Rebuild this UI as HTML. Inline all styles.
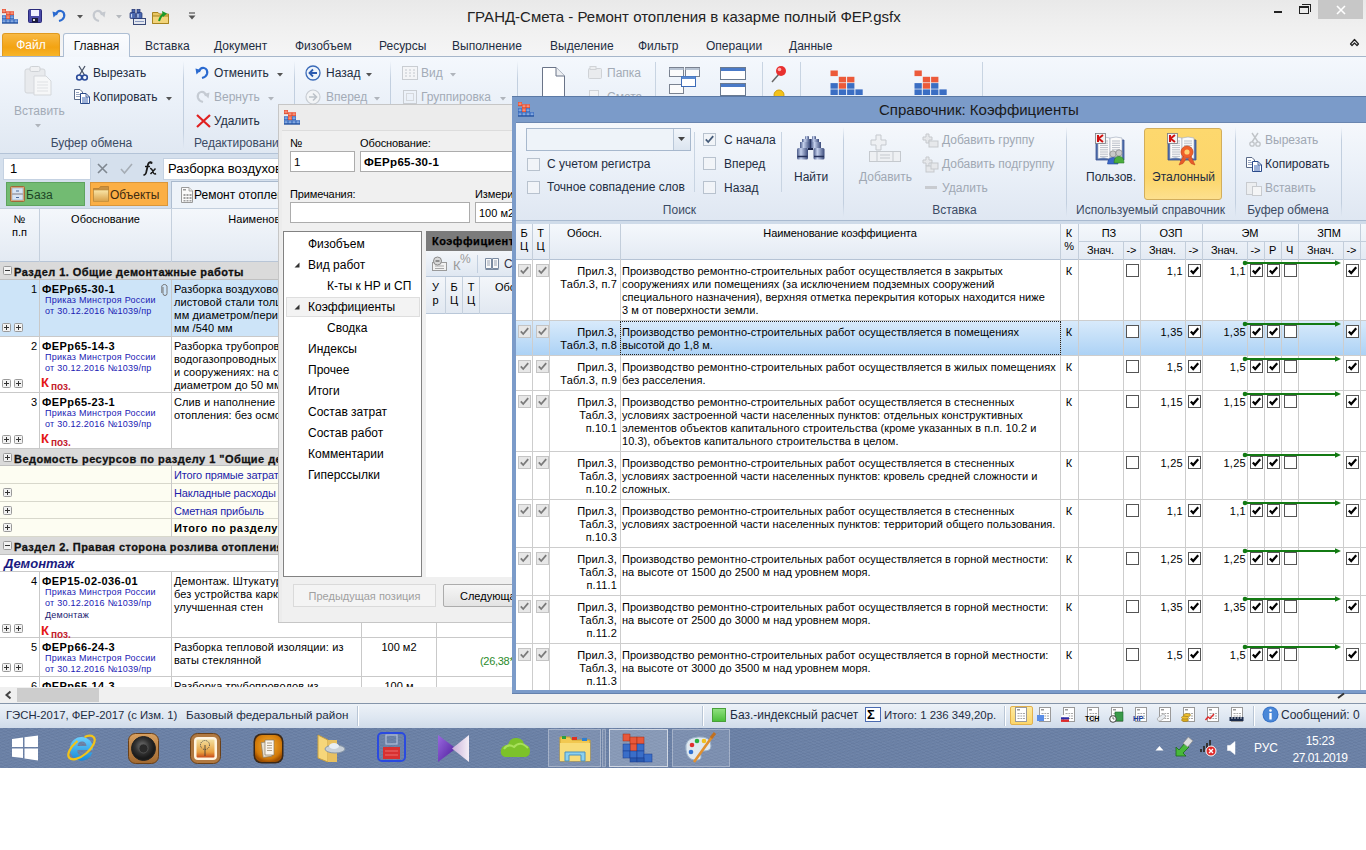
<!DOCTYPE html><html><head><meta charset="utf-8"><style>
*{margin:0;padding:0;box-sizing:border-box}
html,body{width:1366px;height:850px;overflow:hidden;background:#fff;font-family:"Liberation Sans",sans-serif;}
div{position:absolute}
.t{white-space:nowrap;font-size:12px;line-height:14px;color:#1e2b3c}
.g{white-space:nowrap;font-size:11px;line-height:13px;color:#000}
svg{position:absolute;overflow:visible}
</style></head><body>

<div style="left:0px;top:0px;width:1366px;height:33px;background:linear-gradient(#e9e9e9,#eeeeee 60%,#f1f1f1)"></div>
<div class="t" style="left:467px;top:8px;font-size:15px;line-height:18px;color:#222">ГРАНД-Смета - Ремонт отопления в казарме полный ФЕР.gsfx</div>
<div style="left:1274px;top:11px;width:8px;height:2px;background:#222"></div>
<div style="left:1299px;top:6px;width:10px;height:8px;border:1.5px solid #222;border-top-width:2.5px"></div>
<div style="left:1302px;top:4px;width:9px;height:8px;border-top:1.5px solid #222;border-right:1.5px solid #222"></div>
<div style="left:1318px;top:0px;width:45px;height:19px;background:#c7c7c7"></div>
<svg style="left:1336px;top:5px" width="10" height="10"><path d="M1 1L9 9M9 1L1 9" stroke="#fff" stroke-width="1.6"/></svg>
<div style="left:0px;top:33px;width:1366px;height:24px;background:linear-gradient(#f1f1f1,#f5f5f6)"></div>
<div style="left:0px;top:56px;width:1366px;height:1px;background:#a6b6ca"></div>
<div style="left:2px;top:33px;width:58px;height:23px;background:linear-gradient(#f8b944,#f3a312 60%,#f7b52a);border:1px solid #e09a20;border-bottom:none;border-radius:3px 3px 0 0"></div>
<div class="t" style="left:2px;top:38px;width:58px;text-align:center;color:#fff;font-size:12px">Файл</div>
<div style="left:63px;top:33px;width:67px;height:24px;background:linear-gradient(#fbfcfe,#f2f6fb);border:1px solid #aebfd4;border-bottom:none;border-radius:3px 3px 0 0"></div>
<div class="t" style="left:63px;top:39px;width:67px;text-align:center;color:#111;font-size:12px">Главная</div>
<div class="t" style="left:145px;top:39px;color:#1e2d42">Вставка</div>
<div class="t" style="left:214px;top:39px;color:#1e2d42">Документ</div>
<div class="t" style="left:295px;top:39px;color:#1e2d42">Физобъем</div>
<div class="t" style="left:379px;top:39px;color:#1e2d42">Ресурсы</div>
<div class="t" style="left:452px;top:39px;color:#1e2d42">Выполнение</div>
<div class="t" style="left:550px;top:39px;color:#1e2d42">Выделение</div>
<div class="t" style="left:638px;top:39px;color:#1e2d42">Фильтр</div>
<div class="t" style="left:706px;top:39px;color:#1e2d42">Операции</div>
<div class="t" style="left:789px;top:39px;color:#1e2d42">Данные</div>
<svg style="left:1349px;top:38px" width="12" height="9"><path d="M1.5 6L5.5 1.5L9.5 6L8 7.5L5.5 5L3 7.5Z" fill="none" stroke="#222" stroke-width="1.2" stroke-linejoin="round"/></svg>
<div style="left:0px;top:57px;width:1366px;height:96px;background:linear-gradient(#f4f8fd,#eaf0f8 50%,#e0e8f2)"></div>
<div style="left:0px;top:153px;width:1366px;height:1px;background:#b3c3d7"></div>
<div style="left:183px;top:61px;width:1px;height:88px;background:linear-gradient(rgba(180,195,215,0),#c2cfdf 20%,#c2cfdf 80%,rgba(180,195,215,0))"></div>
<div style="left:294px;top:61px;width:1px;height:88px;background:linear-gradient(rgba(180,195,215,0),#c2cfdf 20%,#c2cfdf 80%,rgba(180,195,215,0))"></div>
<div style="left:390px;top:61px;width:1px;height:88px;background:linear-gradient(rgba(180,195,215,0),#c2cfdf 20%,#c2cfdf 80%,rgba(180,195,215,0))"></div>
<div style="left:517px;top:61px;width:1px;height:88px;background:linear-gradient(rgba(180,195,215,0),#c2cfdf 20%,#c2cfdf 80%,rgba(180,195,215,0))"></div>
<div style="left:655px;top:61px;width:1px;height:88px;background:linear-gradient(rgba(180,195,215,0),#c2cfdf 20%,#c2cfdf 80%,rgba(180,195,215,0))"></div>
<div style="left:762px;top:61px;width:1px;height:88px;background:linear-gradient(rgba(180,195,215,0),#c2cfdf 20%,#c2cfdf 80%,rgba(180,195,215,0))"></div>
<div style="left:800px;top:61px;width:1px;height:88px;background:linear-gradient(rgba(180,195,215,0),#c2cfdf 20%,#c2cfdf 80%,rgba(180,195,215,0))"></div>
<div style="left:982px;top:61px;width:1px;height:88px;background:linear-gradient(rgba(180,195,215,0),#c2cfdf 20%,#c2cfdf 80%,rgba(180,195,215,0))"></div>
<div style="left:0px;top:154px;width:1366px;height:54px;background:#d5e0ed"></div>
<div style="left:3px;top:158px;width:88px;height:22px;background:#fff;border:1px solid #c5d2e2"></div>
<div class="t" style="left:10px;top:162px;font-size:13px;color:#000">1</div>
<div style="left:163px;top:158px;width:1200px;height:22px;background:#fff;border:1px solid #c5d2e2"></div>
<div class="t" style="left:168px;top:162px;font-size:13px;color:#000">Разборка воздуховодов из листовой стали</div>
<div style="left:6px;top:182px;width:79px;height:24px;background:#72bb72;border:1px solid #5ea35e"></div>
<div class="t" style="left:26px;top:188px;color:#1e4626">База</div>
<div style="left:90px;top:182px;width:78px;height:24px;background:#fbaf45;border:1px solid #d9963a"></div>
<div class="t" style="left:110px;top:188px;color:#3e2a10">Объекты</div>
<div style="left:171px;top:181px;width:1195px;height:27px;background:#eef3f9;border-left:1px solid #aebdd0;border-top:1px solid #a9b9cd"></div>
<div class="t" style="left:194px;top:188px;color:#000">Ремонт отопления в казарме полный ФЕР</div>
<div style="left:0px;top:208px;width:1366px;height:479px;background:#fff"></div>
<div style="left:0px;top:208px;width:1366px;height:54px;background:linear-gradient(#f4f7fb,#e3eaf3);border-top:1px solid #c3cfdd;border-bottom:1px solid #b8c5d6"></div>
<div style="left:39px;top:208px;width:1px;height:54px;background:#c5d0dd"></div>
<div style="left:171px;top:208px;width:1px;height:54px;background:#c5d0dd"></div>
<div style="left:361px;top:208px;width:1px;height:54px;background:#c5d0dd"></div>
<div style="left:436px;top:208px;width:1px;height:54px;background:#c5d0dd"></div>
<div style="left:540px;top:208px;width:1px;height:54px;background:#c5d0dd"></div>
<div class="t" style="left:0px;top:213px;width:39px;text-align:center;line-height:13px;font-size:11px;color:#000">№<br>п.п</div>
<div class="t" style="left:40px;top:213px;width:131px;text-align:center;font-size:11px;color:#000;line-height:13px">Обоснование</div>
<div class="t" style="left:172px;top:213px;width:189px;text-align:center;font-size:11px;color:#000;line-height:13px">Наименование</div>
<div style="left:0px;top:262px;width:1366px;height:18px;background:#dadada"></div>
<div style="left:0px;top:279px;width:1366px;height:1px;background:#c0c0c0"></div>
<svg style="left:3px;top:266px" width="9" height="9"><rect x="0.5" y="0.5" width="8" height="8" rx="1" fill="#f2f2f2" stroke="#9a9a9a"/><path d="M2 4.5H7" stroke="#333" stroke-width="1"/></svg>
<div class="t" style="left:14px;top:265px;font-size:11px;line-height:14px;font-weight:bold;color:#111;letter-spacing:0.45px;-webkit-text-stroke:0.3px #111">Раздел 1. Общие демонтажные работы</div>
<div style="left:0px;top:280px;width:1366px;height:57px;background:#cde4f8"></div>
<div style="left:0px;top:336px;width:1366px;height:1px;background:#c9c9c9"></div>
<div style="left:39px;top:280px;width:1px;height:57px;background:#c9c9c9"></div>
<div style="left:171px;top:280px;width:1px;height:57px;background:#c9c9c9"></div>
<div style="left:361px;top:280px;width:1px;height:57px;background:#c9c9c9"></div>
<div style="left:436px;top:280px;width:1px;height:57px;background:#c9c9c9"></div>
<div class="g" style="left:0px;top:283px;width:37px;text-align:right;">1</div>
<div class="g" style="left:42px;top:283px;font-weight:bold;letter-spacing:0.4px">ФЕРр65-30-1</div>
<div class="g" style="left:45px;top:295px;font-size:9px;line-height:11px;color:#1a1ab4;letter-spacing:0.25px">Приказ Минстроя России<br>от 30.12.2016 №1039/пр</div>
<svg style="left:2px;top:323px" width="9" height="9"><rect x="0.5" y="0.5" width="8" height="8" rx="1" fill="#f2f2f2" stroke="#9a9a9a"/><path d="M2 4.5H7M4.5 2V7" stroke="#333" stroke-width="1"/></svg>
<svg style="left:14px;top:323px" width="9" height="9"><rect x="0.5" y="0.5" width="8" height="8" rx="1" fill="#f2f2f2" stroke="#9a9a9a"/><path d="M2 4.5H7M4.5 2V7" stroke="#333" stroke-width="1"/></svg>
<div class="g" style="left:174px;top:283px;line-height:13px;letter-spacing:0.1px">Разборка воздуховодов из<br>листовой стали толщиной до 1<br>мм диаметром/периметром до<br>мм /540 мм</div>
<svg style="left:161px;top:283px" width="8" height="14"><path d="M2 4V10.5A2 2 0 0 0 6 10.5V3A3 3 0 0 0 0.8 3V10" fill="none" stroke="#777" stroke-width="1"/></svg>
<div style="left:0px;top:337px;width:1366px;height:56px;background:#fff"></div>
<div style="left:0px;top:392px;width:1366px;height:1px;background:#c9c9c9"></div>
<div style="left:39px;top:337px;width:1px;height:56px;background:#c9c9c9"></div>
<div style="left:171px;top:337px;width:1px;height:56px;background:#c9c9c9"></div>
<div style="left:361px;top:337px;width:1px;height:56px;background:#c9c9c9"></div>
<div style="left:436px;top:337px;width:1px;height:56px;background:#c9c9c9"></div>
<div class="g" style="left:0px;top:340px;width:37px;text-align:right;">2</div>
<div class="g" style="left:42px;top:340px;font-weight:bold;letter-spacing:0.4px">ФЕРр65-14-3</div>
<div class="g" style="left:45px;top:352px;font-size:9px;line-height:11px;color:#1a1ab4;letter-spacing:0.25px">Приказ Минстроя России<br>от 30.12.2016 №1039/пр</div>
<div class="g" style="left:41px;top:376px;color:#e41414;font-weight:bold;line-height:14px"><span style="font-size:13px">К</span><span style="font-size:10px;position:relative;top:3px;left:2px;color:#c4202c">поз.</span></div>
<svg style="left:2px;top:379px" width="9" height="9"><rect x="0.5" y="0.5" width="8" height="8" rx="1" fill="#f2f2f2" stroke="#9a9a9a"/><path d="M2 4.5H7M4.5 2V7" stroke="#333" stroke-width="1"/></svg>
<svg style="left:14px;top:379px" width="9" height="9"><rect x="0.5" y="0.5" width="8" height="8" rx="1" fill="#f2f2f2" stroke="#9a9a9a"/><path d="M2 4.5H7M4.5 2V7" stroke="#333" stroke-width="1"/></svg>
<div class="g" style="left:174px;top:340px;line-height:13px;letter-spacing:0.1px">Разборка трубопроводов из<br>водогазопроводных труб в зданиях<br>и сооружениях: на сварке<br>диаметром до 50 мм</div>
<div style="left:0px;top:393px;width:1366px;height:56px;background:#fff"></div>
<div style="left:0px;top:448px;width:1366px;height:1px;background:#c9c9c9"></div>
<div style="left:39px;top:393px;width:1px;height:56px;background:#c9c9c9"></div>
<div style="left:171px;top:393px;width:1px;height:56px;background:#c9c9c9"></div>
<div style="left:361px;top:393px;width:1px;height:56px;background:#c9c9c9"></div>
<div style="left:436px;top:393px;width:1px;height:56px;background:#c9c9c9"></div>
<div class="g" style="left:0px;top:396px;width:37px;text-align:right;">3</div>
<div class="g" style="left:42px;top:396px;font-weight:bold;letter-spacing:0.4px">ФЕРр65-23-1</div>
<div class="g" style="left:45px;top:408px;font-size:9px;line-height:11px;color:#1a1ab4;letter-spacing:0.25px">Приказ Минстроя России<br>от 30.12.2016 №1039/пр</div>
<div class="g" style="left:41px;top:432px;color:#e41414;font-weight:bold;line-height:14px"><span style="font-size:13px">К</span><span style="font-size:10px;position:relative;top:3px;left:2px;color:#c4202c">поз.</span></div>
<svg style="left:2px;top:435px" width="9" height="9"><rect x="0.5" y="0.5" width="8" height="8" rx="1" fill="#f2f2f2" stroke="#9a9a9a"/><path d="M2 4.5H7M4.5 2V7" stroke="#333" stroke-width="1"/></svg>
<svg style="left:14px;top:435px" width="9" height="9"><rect x="0.5" y="0.5" width="8" height="8" rx="1" fill="#f2f2f2" stroke="#9a9a9a"/><path d="M2 4.5H7M4.5 2V7" stroke="#333" stroke-width="1"/></svg>
<div class="g" style="left:174px;top:396px;line-height:13px;letter-spacing:0.1px">Слив и наполнение водой системы<br>отопления: без осмотра системы</div>
<div style="left:0px;top:449px;width:1366px;height:17px;background:#dadada"></div>
<div style="left:0px;top:465px;width:1366px;height:1px;background:#c0c0c0"></div>
<svg style="left:3px;top:453px" width="9" height="9"><rect x="0.5" y="0.5" width="8" height="8" rx="1" fill="#f2f2f2" stroke="#9a9a9a"/><path d="M2 4.5H7M4.5 2V7" stroke="#333" stroke-width="1"/></svg>
<div class="t" style="left:14px;top:452px;font-size:11px;line-height:14px;font-weight:bold;color:#111;letter-spacing:0.45px;-webkit-text-stroke:0.3px #111">Ведомость ресурсов по разделу 1 "Общие демонтажные работы"</div>
<div style="left:0px;top:466px;width:1366px;height:18px;background:#fdfdf2"></div>
<div style="left:0px;top:483px;width:1366px;height:1px;background:#d8d8cc"></div>
<div style="left:171px;top:466px;width:1px;height:18px;background:#c9c9c9"></div>
<div class="g" style="left:174px;top:468px;font-size:11px;line-height:14px;color:#1e1eaa;letter-spacing:-0.15px">Итого прямые затраты по разделу</div>
<div style="left:0px;top:484px;width:1366px;height:18px;background:#fdfdf2"></div>
<div style="left:0px;top:501px;width:1366px;height:1px;background:#d8d8cc"></div>
<div style="left:171px;top:484px;width:1px;height:18px;background:#c9c9c9"></div>
<svg style="left:3px;top:488px" width="9" height="9"><rect x="0.5" y="0.5" width="8" height="8" rx="1" fill="#f2f2f2" stroke="#9a9a9a"/><path d="M2 4.5H7M4.5 2V7" stroke="#333" stroke-width="1"/></svg>
<div class="g" style="left:174px;top:486px;font-size:11px;line-height:14px;color:#1e1eaa;letter-spacing:-0.15px">Накладные расходы</div>
<div style="left:0px;top:502px;width:1366px;height:17px;background:#fdfdf2"></div>
<div style="left:0px;top:518px;width:1366px;height:1px;background:#d8d8cc"></div>
<div style="left:171px;top:502px;width:1px;height:17px;background:#c9c9c9"></div>
<svg style="left:3px;top:506px" width="9" height="9"><rect x="0.5" y="0.5" width="8" height="8" rx="1" fill="#f2f2f2" stroke="#9a9a9a"/><path d="M2 4.5H7M4.5 2V7" stroke="#333" stroke-width="1"/></svg>
<div class="g" style="left:174px;top:504px;font-size:11px;line-height:14px;color:#1e1eaa;letter-spacing:-0.15px">Сметная прибыль</div>
<div style="left:0px;top:519px;width:1366px;height:18px;background:#fdfdf2"></div>
<div style="left:0px;top:536px;width:1366px;height:1px;background:#d8d8cc"></div>
<div style="left:171px;top:519px;width:1px;height:18px;background:#c9c9c9"></div>
<svg style="left:3px;top:523px" width="9" height="9"><rect x="0.5" y="0.5" width="8" height="8" rx="1" fill="#f2f2f2" stroke="#9a9a9a"/><path d="M2 4.5H7M4.5 2V7" stroke="#333" stroke-width="1"/></svg>
<div class="g" style="left:174px;top:521px;font-size:11px;line-height:14px;color:#000;font-weight:bold;letter-spacing:0.56px">Итого по разделу 1</div>
<div style="left:0px;top:537px;width:1366px;height:18px;background:#dadada"></div>
<div style="left:0px;top:554px;width:1366px;height:1px;background:#c0c0c0"></div>
<svg style="left:3px;top:541px" width="9" height="9"><rect x="0.5" y="0.5" width="8" height="8" rx="1" fill="#f2f2f2" stroke="#9a9a9a"/><path d="M2 4.5H7" stroke="#333" stroke-width="1"/></svg>
<div class="t" style="left:14px;top:540px;font-size:11px;line-height:14px;font-weight:bold;color:#111;letter-spacing:0.45px;-webkit-text-stroke:0.3px #111">Раздел 2. Правая сторона розлива отопления</div>
<div style="left:0px;top:555px;width:1366px;height:17px;background:#fff"></div>
<div style="left:0px;top:571px;width:1366px;height:1px;background:#c9c9c9"></div>
<div class="g" style="left:4px;top:557px;font-size:13px;line-height:14px;color:#1a1a80;font-weight:bold;font-style:italic">Демонтаж</div>
<div style="left:0px;top:572px;width:1366px;height:66px;background:#fff"></div>
<div style="left:0px;top:637px;width:1366px;height:1px;background:#c9c9c9"></div>
<div style="left:39px;top:572px;width:1px;height:66px;background:#c9c9c9"></div>
<div style="left:171px;top:572px;width:1px;height:66px;background:#c9c9c9"></div>
<div style="left:361px;top:572px;width:1px;height:66px;background:#c9c9c9"></div>
<div style="left:436px;top:572px;width:1px;height:66px;background:#c9c9c9"></div>
<div class="g" style="left:0px;top:575px;width:37px;text-align:right;">4</div>
<div class="g" style="left:42px;top:575px;font-weight:bold;letter-spacing:0.4px">ФЕР15-02-036-01</div>
<div class="g" style="left:45px;top:587px;font-size:9px;line-height:11px;color:#1a1ab4;letter-spacing:0.25px">Приказ Минстроя России<br>от 30.12.2016 №1039/пр</div>
<div class="g" style="left:45px;top:610px;font-size:9px;line-height:11px;color:#202070;letter-spacing:0.2px">Демонтаж</div>
<div class="g" style="left:41px;top:624px;color:#e41414;font-weight:bold;line-height:14px"><span style="font-size:13px">К</span><span style="font-size:10px;position:relative;top:3px;left:2px;color:#c4202c">поз.</span></div>
<svg style="left:2px;top:624px" width="9" height="9"><rect x="0.5" y="0.5" width="8" height="8" rx="1" fill="#f2f2f2" stroke="#9a9a9a"/><path d="M2 4.5H7M4.5 2V7" stroke="#333" stroke-width="1"/></svg>
<svg style="left:14px;top:624px" width="9" height="9"><rect x="0.5" y="0.5" width="8" height="8" rx="1" fill="#f2f2f2" stroke="#9a9a9a"/><path d="M2 4.5H7M4.5 2V7" stroke="#333" stroke-width="1"/></svg>
<div class="g" style="left:174px;top:575px;line-height:13px;letter-spacing:0.1px">Демонтаж. Штукатурка по сетке<br>без устройства каркаса:<br>улучшенная стен</div>
<div style="left:0px;top:638px;width:1366px;height:39px;background:#fff"></div>
<div style="left:0px;top:676px;width:1366px;height:1px;background:#c9c9c9"></div>
<div style="left:39px;top:638px;width:1px;height:39px;background:#c9c9c9"></div>
<div style="left:171px;top:638px;width:1px;height:39px;background:#c9c9c9"></div>
<div style="left:361px;top:638px;width:1px;height:39px;background:#c9c9c9"></div>
<div style="left:436px;top:638px;width:1px;height:39px;background:#c9c9c9"></div>
<div class="g" style="left:0px;top:641px;width:37px;text-align:right;">5</div>
<div class="g" style="left:42px;top:641px;font-weight:bold;letter-spacing:0.4px">ФЕРр66-24-3</div>
<div class="g" style="left:45px;top:653px;font-size:9px;line-height:11px;color:#1a1ab4;letter-spacing:0.25px">Приказ Минстроя России<br>от 30.12.2016 №1039/пр</div>
<svg style="left:2px;top:663px" width="9" height="9"><rect x="0.5" y="0.5" width="8" height="8" rx="1" fill="#f2f2f2" stroke="#9a9a9a"/><path d="M2 4.5H7M4.5 2V7" stroke="#333" stroke-width="1"/></svg>
<svg style="left:14px;top:663px" width="9" height="9"><rect x="0.5" y="0.5" width="8" height="8" rx="1" fill="#f2f2f2" stroke="#9a9a9a"/><path d="M2 4.5H7M4.5 2V7" stroke="#333" stroke-width="1"/></svg>
<div class="g" style="left:174px;top:641px;line-height:13px;letter-spacing:0.1px">Разборка тепловой изоляции: из<br>ваты стеклянной</div>
<div class="g" style="left:362px;top:641px;width:74px;text-align:center">100 м2</div>
<div class="g" style="left:480px;top:655px;color:#2a8a2a;letter-spacing:-0.3px">(26,38*</div>
<div style="left:0px;top:677px;width:1366px;height:20px;background:#fff"></div>
<div style="left:0px;top:696px;width:1366px;height:1px;background:#c9c9c9"></div>
<div style="left:39px;top:677px;width:1px;height:20px;background:#c9c9c9"></div>
<div style="left:171px;top:677px;width:1px;height:20px;background:#c9c9c9"></div>
<div style="left:361px;top:677px;width:1px;height:20px;background:#c9c9c9"></div>
<div style="left:436px;top:677px;width:1px;height:20px;background:#c9c9c9"></div>
<div class="g" style="left:0px;top:680px;width:37px;text-align:right;">6</div>
<div class="g" style="left:42px;top:680px;font-weight:bold;letter-spacing:0.4px">ФЕРр65-14-3</div>
<div class="g" style="left:45px;top:692px;font-size:9px;line-height:11px;color:#1a1ab4;letter-spacing:0.25px">Приказ Минстроя России<br>от 30.12.2016 №1039/пр</div>
<div class="g" style="left:174px;top:680px;line-height:13px;letter-spacing:0.1px">Разборка трубопроводов из</div>
<div class="g" style="left:362px;top:680px;width:74px;text-align:center">100 м</div>
<div style="left:0px;top:687px;width:1366px;height:16px;background:#f0f0f0"></div>
<svg style="left:5px;top:691px" width="7" height="8"><path d="M5.5 0.5L1.5 4L5.5 7.5" fill="none" stroke="#444" stroke-width="2"/></svg>
<div style="left:17px;top:688px;width:82px;height:14px;background:#cdcdcd"></div>
<div style="left:0px;top:703px;width:1366px;height:25px;background:linear-gradient(#edf2f8,#dde6f1 60%,#d0dbe9);border-top:1px solid #8595aa"></div>
<div class="t" style="left:6px;top:708px;font-size:11.3px;line-height:14px;color:#1e2d42">ГЭСН-2017, ФЕР-2017 (с Изм. 1)</div>
<div class="t" style="left:186px;top:708px;font-size:11.7px;line-height:14px;color:#1e2d42">Базовый федеральный район</div>
<div style="left:357px;top:706px;width:1px;height:20px;background:#b9c6d6;box-shadow:1px 0 0 #fff"></div>
<div style="left:702px;top:706px;width:1px;height:20px;background:#b9c6d6;box-shadow:1px 0 0 #fff"></div>
<div style="left:1004px;top:706px;width:1px;height:20px;background:#b9c6d6;box-shadow:1px 0 0 #fff"></div>
<div style="left:1253px;top:706px;width:1px;height:20px;background:#b9c6d6;box-shadow:1px 0 0 #fff"></div>
<div style="left:712px;top:708px;width:14px;height:14px;background:linear-gradient(#8fe07f,#4cbf3c);border:1px solid #49a03a"></div>
<div class="t" style="left:730px;top:708px;font-size:12px;line-height:14px;color:#1e2d42">Баз.-индексный расчет</div>
<div style="left:865px;top:707px;width:16px;height:15px;background:#fff;border:1px solid #4a6ab0"></div>
<div class="t" style="left:867px;top:708px;font-size:13px;line-height:14px;font-weight:bold;color:#000">Σ</div>
<div class="t" style="left:884px;top:708px;font-size:11.4px;line-height:14px;color:#1e2d42">Итого: 1 236 349,20р.</div>
<div style="left:1010px;top:706px;width:23px;height:19px;background:linear-gradient(#fde9a0,#fbd66a);border:1px solid #e3b14c;border-radius:2px"></div>
<svg style="left:1013px;top:707px" width="16" height="16"><rect x="2.5" y="0.5" width="11" height="14" fill="#fff" stroke="#9a9a9a"/><rect x="4" y="2" width="3" height="1.5" fill="#999"/><path d="M4.5 6.5H12M4.5 9H12M4.5 11.5H12" stroke="#a8a8a8" stroke-width="1.2"/><path d="M7 5.5V12.5M9.5 5.5V12.5" stroke="#fff" stroke-width="0.8"/></svg>
<svg style="left:1037px;top:707px" width="16" height="16"><rect x="2.5" y="0.5" width="11" height="14" fill="#fff" stroke="#9a9a9a"/><rect x="4" y="2" width="3" height="1.5" fill="#999"/><path d="M4.5 6.5H12M4.5 9H12M4.5 11.5H12" stroke="#a8a8a8" stroke-width="1.2"/><path d="M7 5.5V12.5M9.5 5.5V12.5" stroke="#fff" stroke-width="0.8"/><rect x="0" y="8" width="7" height="6" fill="#5a8ee8"/></svg>
<svg style="left:1061px;top:707px" width="16" height="16"><rect x="2.5" y="0.5" width="11" height="14" fill="#fff" stroke="#9a9a9a"/><rect x="4" y="2" width="3" height="1.5" fill="#999"/><path d="M4.5 6.5H12M4.5 9H12M4.5 11.5H12" stroke="#a8a8a8" stroke-width="1.2"/><path d="M7 5.5V12.5M9.5 5.5V12.5" stroke="#fff" stroke-width="0.8"/><rect x="0" y="8" width="8" height="2.3" fill="#fff" stroke="#ccc" stroke-width="0.3"/><rect x="0" y="10.3" width="8" height="2.3" fill="#2a2aa8"/><rect x="0" y="12.6" width="8" height="2.3" fill="#e02a2a"/></svg>
<svg style="left:1085px;top:707px" width="16" height="16"><rect x="2.5" y="0.5" width="11" height="14" fill="#fff" stroke="#9a9a9a"/><rect x="4" y="2" width="3" height="1.5" fill="#999"/><path d="M4.5 6.5H12M4.5 9H12M4.5 11.5H12" stroke="#a8a8a8" stroke-width="1.2"/><path d="M7 5.5V12.5M9.5 5.5V12.5" stroke="#fff" stroke-width="0.8"/><text x="0" y="14" font-family="Liberation Sans" font-weight="bold" font-size="7" fill="#000">TCH</text></svg>
<svg style="left:1109px;top:707px" width="16" height="16"><rect x="2.5" y="0.5" width="11" height="14" fill="#fff" stroke="#9a9a9a"/><rect x="4" y="2" width="3" height="1.5" fill="#999"/><path d="M4.5 6.5H12M4.5 9H12M4.5 11.5H12" stroke="#a8a8a8" stroke-width="1.2"/><path d="M7 5.5V12.5M9.5 5.5V12.5" stroke="#fff" stroke-width="0.8"/><rect x="6" y="5" width="8" height="9" fill="#3a9a4a" stroke="#1a6a2a" stroke-width="0.6"/><circle cx="4" cy="12" r="3.3" fill="#fff" stroke="#333" stroke-width="0.9"/><path d="M4 10V12H5.5" stroke="#333" stroke-width="0.7" fill="none"/></svg>
<svg style="left:1133px;top:707px" width="16" height="16"><rect x="2.5" y="0.5" width="11" height="14" fill="#fff" stroke="#9a9a9a"/><rect x="4" y="2" width="3" height="1.5" fill="#999"/><path d="M4.5 6.5H12M4.5 9H12M4.5 11.5H12" stroke="#a8a8a8" stroke-width="1.2"/><path d="M7 5.5V12.5M9.5 5.5V12.5" stroke="#fff" stroke-width="0.8"/><text x="0" y="14" font-family="Liberation Sans" font-weight="bold" font-size="7.5" fill="#1a3a9a">HP</text></svg>
<svg style="left:1157px;top:707px" width="16" height="16"><rect x="2.5" y="0.5" width="11" height="14" fill="#fff" stroke="#9a9a9a"/><rect x="4" y="2" width="3" height="1.5" fill="#999"/><path d="M4.5 6.5H12M4.5 9H12M4.5 11.5H12" stroke="#a8a8a8" stroke-width="1.2"/><path d="M7 5.5V12.5M9.5 5.5V12.5" stroke="#fff" stroke-width="0.8"/><rect x="0" y="9" width="9" height="4" rx="2" transform="rotate(-35 4 11)" fill="#e8ecf0" stroke="#999" stroke-width="0.6"/></svg>
<svg style="left:1181px;top:707px" width="16" height="16"><rect x="2.5" y="0.5" width="11" height="14" fill="#fff" stroke="#9a9a9a"/><rect x="4" y="2" width="3" height="1.5" fill="#999"/><path d="M4.5 6.5H12M4.5 9H12M4.5 11.5H12" stroke="#a8a8a8" stroke-width="1.2"/><path d="M7 5.5V12.5M9.5 5.5V12.5" stroke="#fff" stroke-width="0.8"/><ellipse cx="4" cy="13" rx="3.5" ry="1.5" fill="#e0b020" stroke="#8a6a10" stroke-width="0.5"/><ellipse cx="4" cy="10.5" rx="3.5" ry="1.5" fill="#f0c030" stroke="#8a6a10" stroke-width="0.5"/><ellipse cx="6" cy="8" rx="3.5" ry="1.5" fill="#f0c030" stroke="#8a6a10" stroke-width="0.5"/></svg>
<svg style="left:1205px;top:707px" width="16" height="16"><rect x="2.5" y="0.5" width="11" height="14" fill="#fff" stroke="#9a9a9a"/><rect x="4" y="2" width="3" height="1.5" fill="#999"/><path d="M4.5 6.5H12M4.5 9H12M4.5 11.5H12" stroke="#a8a8a8" stroke-width="1.2"/><path d="M7 5.5V12.5M9.5 5.5V12.5" stroke="#fff" stroke-width="0.8"/><path d="M0.5 13L3 10L5 11.5L9 7" fill="none" stroke="#e02a2a" stroke-width="1.4"/></svg>
<svg style="left:1229px;top:707px" width="16" height="16"><rect x="2.5" y="0.5" width="11" height="14" fill="#fff" stroke="#9a9a9a"/><rect x="4" y="2" width="3" height="1.5" fill="#999"/><path d="M4.5 6.5H12M4.5 9H12M4.5 11.5H12" stroke="#a8a8a8" stroke-width="1.2"/><path d="M7 5.5V12.5M9.5 5.5V12.5" stroke="#fff" stroke-width="0.8"/><rect x="0.5" y="10" width="14" height="4" fill="#1a2a4a"/><path d="M3 10V12M6 10V12M9 10V12M12 10V12" stroke="#fff" stroke-width="0.8"/></svg>
<svg style="left:1262px;top:706px" width="17" height="17"><circle cx="8.5" cy="8.5" r="8" fill="#3a74c8"/><circle cx="8.5" cy="8.5" r="7" fill="#4a88d8"/><rect x="7.3" y="7" width="2.4" height="6.5" fill="#fff"/><circle cx="8.5" cy="4.5" r="1.3" fill="#fff"/></svg>
<div class="t" style="left:1281px;top:708px;font-size:12px;line-height:14px;color:#1e2d42">Сообщений: 0</div>
<div style="left:0px;top:728px;width:1366px;height:40px;background:linear-gradient(#5a7598,#4f6a8e 50%,#4a6589)"></div>
<svg style="left:24px;top:66px" width="28" height="30"><rect x="1" y="3" width="20" height="24" rx="2" fill="#e8eaed" stroke="#d2d5d9"/><rect x="6" y="0.5" width="10" height="5" rx="1.5" fill="#f0f1f3" stroke="#cfd2d6"/><path d="M10 10H22L27 15V29H10Z" fill="#f6f7f8" stroke="#d4d7db"/><path d="M13 16H24M13 19H24M13 22H24M13 25H24" stroke="#dfe1e4"/></svg>
<div class="t" style="left:14px;top:104px;color:#a3abb6">Вставить</div>
<svg style="left:35px;top:124px" width="6" height="4"><path d="M0 0H6L3 3.5Z" fill="#b0b5bc"/></svg>
<svg style="left:76px;top:66px" width="12" height="15"><path d="M3 0L8.5 9M9 0L3.5 9" stroke="#4a5468" stroke-width="1.3"/><circle cx="3.2" cy="11.5" r="2.5" fill="none" stroke="#2a4a9a" stroke-width="1.6"/><circle cx="8.8" cy="11.5" r="2.5" fill="none" stroke="#2a4a9a" stroke-width="1.6"/></svg>
<div class="t" style="left:93px;top:66px;color:#1e2d42">Вырезать</div>
<svg style="left:74px;top:89px" width="16" height="15"><path d="M0.5 0.5H6L8.5 3V10.5H0.5Z" fill="#fff" stroke="#5a6a88"/><path d="M2 3.5H5M2 5.5H7M2 7.5H7" stroke="#8a9ab8" stroke-width="0.9"/><path d="M6.5 4.5H12L15.5 8V14.5H6.5Z" fill="#fff" stroke="#2a4a8a"/><path d="M12 4.5V8H15.5" fill="none" stroke="#2a4a8a" stroke-width="0.8"/><path d="M8 9H14M8 11H14M8 13H14" stroke="#3a62b0" stroke-width="1"/></svg>
<div class="t" style="left:93px;top:90px;color:#1e2d42">Копировать</div>
<svg style="left:166px;top:97px" width="6" height="4"><path d="M0 0H6L3 3.5Z" fill="#555"/></svg>
<div class="t" style="left:0px;top:136px;width:183px;text-align:center;color:#3b4b64">Буфер обмена</div>
<svg style="left:195px;top:66px" width="14" height="13"><path d="M4 6Q5 1.5 9 2Q13 3 12 8Q11 11 7 12" fill="none" stroke="#2a6ad0" stroke-width="2.2"/><path d="M0.5 2.5L6 4L1.5 8.5Z" fill="#2a6ad0"/></svg>
<div class="t" style="left:214px;top:66px;color:#1e2d42">Отменить</div>
<svg style="left:277px;top:73px" width="6" height="4"><path d="M0 0H6L3 3.5Z" fill="#555"/></svg>
<svg style="left:196px;top:90px" width="14" height="13"><path d="M10 6Q9 1.5 5 2Q1 3 2 8Q3 11 7 12" fill="none" stroke="#c5cbd3" stroke-width="2.2"/><path d="M13.5 2.5L8 4L12.5 8.5Z" fill="#c5cbd3"/></svg>
<div class="t" style="left:214px;top:90px;color:#a3abb6">Вернуть</div>
<svg style="left:268px;top:97px" width="6" height="4"><path d="M0 0H6L3 3.5Z" fill="#b0b5bc"/></svg>
<svg style="left:196px;top:114px" width="15" height="14"><path d="M1 1L14 13M14 1L1 13" stroke="#e02020" stroke-width="2.2"/></svg>
<div class="t" style="left:214px;top:114px;color:#1e2d42">Удалить</div>
<div class="t" style="left:194px;top:136px;color:#3b4b64">Редактирование</div>
<svg style="left:305px;top:65px" width="16" height="16"><circle cx="8" cy="8" r="7" fill="#eef4fb" stroke="#3a6ab8" stroke-width="1.3"/><path d="M12 8H5M8 4.5L4.5 8L8 11.5" fill="none" stroke="#2a5ab0" stroke-width="1.8"/></svg>
<div class="t" style="left:326px;top:66px;color:#1e2d42">Назад</div>
<svg style="left:366px;top:73px" width="6" height="4"><path d="M0 0H6L3 3.5Z" fill="#555"/></svg>
<svg style="left:305px;top:89px" width="16" height="16"><circle cx="8" cy="8" r="7" fill="#f2f4f6" stroke="#c8cdd3" stroke-width="1.2"/><path d="M4 8H11M8 4.5L11.5 8L8 11.5" fill="none" stroke="#bcc2c9" stroke-width="1.6"/></svg>
<div class="t" style="left:326px;top:90px;color:#a3abb6">Вперед</div>
<svg style="left:374px;top:97px" width="6" height="4"><path d="M0 0H6L3 3.5Z" fill="#b0b5bc"/></svg>
<svg style="left:402px;top:66px" width="16" height="14"><rect x="0.5" y="0.5" width="15" height="13" fill="#f4f5f7" stroke="#c9cdd2"/><path d="M3 4H5M7 4H9M11 4H13M3 7H5M7 7H9M11 7H13M3 10H5M7 10H9M11 10H13" stroke="#c3c8ce"/></svg>
<div class="t" style="left:421px;top:66px;color:#a3abb6">Вид</div>
<svg style="left:450px;top:73px" width="6" height="4"><path d="M0 0H6L3 3.5Z" fill="#b0b5bc"/></svg>
<svg style="left:403px;top:90px" width="14" height="14"><rect x="0.5" y="0.5" width="13" height="13" fill="none" stroke="#c9cdd2"/><rect x="3.5" y="3.5" width="7" height="7" fill="none" stroke="#d5d8dc"/></svg>
<div class="t" style="left:421px;top:90px;color:#a3abb6">Группировка</div>
<svg style="left:500px;top:97px" width="6" height="4"><path d="M0 0H6L3 3.5Z" fill="#b0b5bc"/></svg>
<svg style="left:542px;top:67px" width="23" height="32"><path d="M0.5 0.5H14L22.5 9V31.5H0.5Z" fill="#fff" stroke="#6a7488"/><path d="M14 0.5V9H22.5" fill="#eef0f3" stroke="#6a7488"/></svg>
<svg style="left:588px;top:66px" width="14" height="13"><rect x="0.5" y="2.5" width="13" height="10" rx="1" fill="#e9ebee" stroke="#cfd2d6"/><rect x="2" y="0.5" width="6" height="3" fill="#eceef0" stroke="#d0d3d7"/></svg>
<div class="t" style="left:607px;top:66px;color:#a3abb6">Папка</div>
<svg style="left:589px;top:90px" width="12" height="10"><rect x="0.5" y="0.5" width="9" height="9" fill="#f2f3f5" stroke="#d0d3d7"/></svg>
<div class="t" style="left:607px;top:90px;color:#a3abb6">Смета</div>
<div style="left:655px;top:62px;width:1px;height:34px;background:#c8d4e2"></div>
<svg style="left:669px;top:67px" width="32" height="28"><rect x="0.5" y="0.5" width="14" height="9" fill="#fbfbfb" stroke="#7a8290"/><rect x="16.5" y="0.5" width="14" height="9" fill="#fbfbfb" stroke="#7a8290"/><rect x="0.5" y="17.5" width="14" height="9" fill="#fbfbfb" stroke="#7a8290"/><rect x="0.5" y="1" width="14" height="2" fill="#b8c4d4"/><rect x="16.5" y="1" width="14" height="2" fill="#b8c4d4"/><rect x="12.5" y="9.5" width="14" height="10" fill="#fff" stroke="#3a6ab8"/><rect x="12.5" y="9.5" width="14" height="2.5" fill="#5a8ad0"/></svg>
<svg style="left:720px;top:67px" width="26" height="30"><rect x="0.5" y="0.5" width="25" height="12" fill="#fff" stroke="#6a7a90"/><rect x="0.5" y="16.5" width="25" height="12" fill="#fff" stroke="#6a7a90"/><rect x="1" y="1" width="24" height="3" fill="#4a7ac8"/><rect x="1" y="17" width="24" height="3" fill="#4a7ac8"/></svg>
<div style="left:762px;top:62px;width:1px;height:34px;background:#c8d4e2"></div>
<svg style="left:770px;top:65px" width="18" height="20"><path d="M2 17L9 9" stroke="#666" stroke-width="1.5"/><circle cx="11" cy="6" r="5" fill="#e83030"/><circle cx="9.5" cy="4.5" r="1.8" fill="#ffb0b0"/></svg>
<svg style="left:773px;top:89px" width="12" height="8"><circle cx="6" cy="6" r="5" fill="#f4c21a" stroke="#d0a010"/></svg>
<div style="left:800px;top:62px;width:1px;height:34px;background:#c8d4e2"></div>
<svg style="left:830px;top:70px" width="34" height="26" viewBox="0 0 34 26"><rect x="0.5" y="0.5" width="7.3" height="5.6" fill="#ec5a3a"/><rect x="8.8" y="6.8" width="7.3" height="5.6" fill="#ec5a3a"/><rect x="17.1" y="6.8" width="7.3" height="5.6" fill="#ec5a3a"/><rect x="0.5" y="13.1" width="7.3" height="5.6" fill="#3b6ec3"/><rect x="8.8" y="13.1" width="7.3" height="5.6" fill="#ec5a3a"/><rect x="17.1" y="13.1" width="7.3" height="5.6" fill="#3b6ec3"/><rect x="0.5" y="19.4" width="7.3" height="5.6" fill="#3b6ec3"/><rect x="8.8" y="19.4" width="7.3" height="5.6" fill="#3b6ec3"/><rect x="17.1" y="19.4" width="7.3" height="5.6" fill="#3b6ec3"/><rect x="25.400000000000002" y="19.4" width="7.3" height="5.6" fill="#3b6ec3"/></svg>
<svg style="left:914px;top:70px" width="34" height="26" viewBox="0 0 34 26"><rect x="0.5" y="0.5" width="7.3" height="5.6" fill="#ec5a3a"/><rect x="8.8" y="6.8" width="7.3" height="5.6" fill="#ec5a3a"/><rect x="17.1" y="6.8" width="7.3" height="5.6" fill="#ec5a3a"/><rect x="0.5" y="13.1" width="7.3" height="5.6" fill="#3b6ec3"/><rect x="8.8" y="13.1" width="7.3" height="5.6" fill="#ec5a3a"/><rect x="17.1" y="13.1" width="7.3" height="5.6" fill="#3b6ec3"/><rect x="0.5" y="19.4" width="7.3" height="5.6" fill="#3b6ec3"/><rect x="8.8" y="19.4" width="7.3" height="5.6" fill="#3b6ec3"/><rect x="17.1" y="19.4" width="7.3" height="5.6" fill="#3b6ec3"/><rect x="25.400000000000002" y="19.4" width="7.3" height="5.6" fill="#3b6ec3"/></svg>
<div style="left:982px;top:62px;width:1px;height:34px;background:#c8d4e2"></div>
<svg style="left:2px;top:9px" width="16.0" height="15.0" viewBox="0 0 16 15"><rect x="0" y="0" width="4" height="4" fill="#ec5a3e"/><path d="M2 0.5V3.5M0.5 2H3.5" stroke="#f9b09a" stroke-width="0.7"/><path d="M0 3.8H4" stroke="#c23c22" stroke-width="0.5"/><rect x="4" y="2.2" width="4" height="4" fill="#ec5a3e"/><path d="M6 2.7V5.7M4.5 4.2H7.5" stroke="#f9b09a" stroke-width="0.7"/><path d="M4 6.0H8" stroke="#c23c22" stroke-width="0.5"/><rect x="8" y="2.2" width="4" height="4" fill="#ec5a3e"/><path d="M10 2.7V5.7M8.5 4.2H11.5" stroke="#f9b09a" stroke-width="0.7"/><path d="M8 6.0H12" stroke="#c23c22" stroke-width="0.5"/><rect x="0" y="6.2" width="4" height="4" fill="#3f71c4"/><path d="M2 6.7V9.7M0.5 8.2H3.5" stroke="#a9c6ee" stroke-width="0.7"/><path d="M0 10.0H4" stroke="#28559e" stroke-width="0.5"/><rect x="4" y="6.2" width="4" height="4" fill="#ec5a3e"/><path d="M6 6.7V9.7M4.5 8.2H7.5" stroke="#f9b09a" stroke-width="0.7"/><path d="M4 10.0H8" stroke="#c23c22" stroke-width="0.5"/><rect x="8" y="6.2" width="4" height="4" fill="#3f71c4"/><path d="M10 6.7V9.7M8.5 8.2H11.5" stroke="#a9c6ee" stroke-width="0.7"/><path d="M8 10.0H12" stroke="#28559e" stroke-width="0.5"/><rect x="0" y="10.2" width="4" height="4" fill="#3f71c4"/><path d="M2 10.7V13.7M0.5 12.2H3.5" stroke="#a9c6ee" stroke-width="0.7"/><path d="M0 14.0H4" stroke="#28559e" stroke-width="0.5"/><rect x="4" y="10.2" width="4" height="4" fill="#3f71c4"/><path d="M6 10.7V13.7M4.5 12.2H7.5" stroke="#a9c6ee" stroke-width="0.7"/><path d="M4 14.0H8" stroke="#28559e" stroke-width="0.5"/><rect x="8" y="10.2" width="4" height="4" fill="#3f71c4"/><path d="M10 10.7V13.7M8.5 12.2H11.5" stroke="#a9c6ee" stroke-width="0.7"/><path d="M8 14.0H12" stroke="#28559e" stroke-width="0.5"/><rect x="12" y="10.2" width="4" height="4" fill="#3f71c4"/><path d="M14 10.7V13.7M12.5 12.2H15.5" stroke="#a9c6ee" stroke-width="0.7"/><path d="M12 14.0H16" stroke="#28559e" stroke-width="0.5"/><rect x="0" y="13.6" width="16" height="0.9" fill="#24509a"/></svg>
<svg style="left:28px;top:9px" width="14" height="14"><rect x="0.5" y="0.5" width="13" height="13" rx="1" fill="#4a4aa8" stroke="#2a2a7a"/><rect x="3" y="1" width="8" height="6" fill="#f0f0ff"/><rect x="4" y="9" width="6" height="4.5" fill="#1a1a3a"/><rect x="5" y="10" width="2" height="2" fill="#ddd"/></svg>
<svg style="left:52px;top:9px" width="14" height="13"><path d="M4 6Q5 1.5 9 2Q13 3 12 8Q11 11 7 12" fill="none" stroke="#2a6ad0" stroke-width="2.2"/><path d="M0.5 2.5L6 4L1.5 8.5Z" fill="#2a6ad0"/></svg>
<svg style="left:77px;top:15px" width="6" height="4"><path d="M0 0H6L3 3.5Z" fill="#555"/></svg>
<svg style="left:92px;top:9px" width="14" height="13"><path d="M10 6Q9 1.5 5 2Q1 3 2 8Q3 11 7 12" fill="none" stroke="#c5c9cf" stroke-width="2.2"/><path d="M13.5 2.5L8 4L12.5 8.5Z" fill="#c5c9cf"/></svg>
<svg style="left:116px;top:15px" width="6" height="4"><path d="M0 0H6L3 3.5Z" fill="#b5b9be"/></svg>
<svg style="left:129px;top:9px" width="17" height="16"><rect x="4.5" y="9.5" width="12" height="6" fill="#e4e8f0" stroke="#3a4a78"/><path d="M6 12.5H15" stroke="#8a9ac0"/><g fill="#4a68b0" stroke="#1e3070" stroke-width="0.7"><rect x="3" y="0.5" width="3" height="3"/><rect x="8" y="0.5" width="3" height="3"/><rect x="1" y="3.5" width="5.5" height="6" rx="1"/><rect x="7.5" y="3.5" width="5.5" height="6" rx="1"/></g><path d="M2.5 5V8.5M9 5V8.5" stroke="#c8d8f4" stroke-width="1.2"/></svg>
<svg style="left:152px;top:9px" width="17" height="15"><path d="M0.5 3.5H6L7.5 5H16.5V14.5H0.5Z" fill="#e9c662" stroke="#a88420"/><path d="M0.5 7H16.5V14.5H0.5Z" fill="#f2d47a" stroke="#a88420"/><path d="M7 12Q9 6 12 5" fill="none" stroke="#1a9a2a" stroke-width="2"/><path d="M10 2L15 4.5L11 8Z" fill="#1a9a2a"/></svg>
<svg style="left:188px;top:12px" width="8" height="8"><path d="M1 1H7" stroke="#555" stroke-width="1.2"/><path d="M0.5 3.5H7.5L4 7.5Z" fill="#555"/></svg>
<svg style="left:97px;top:163px" width="11" height="11"><path d="M1 1L10 10M10 1L1 10" stroke="#7f8790" stroke-width="1.6"/></svg>
<svg style="left:120px;top:163px" width="13" height="11"><path d="M1 6L4.5 10L12 1" fill="none" stroke="#a6adb5" stroke-width="1.6"/></svg>
<svg style="left:142px;top:161px" width="15" height="15"><path d="M1.5 14Q4 14 4.5 10L6 3.5Q6.7 1 9 1.2" fill="none" stroke="#1a1a1a" stroke-width="1.8"/><circle cx="9.3" cy="1.8" r="1.2" fill="#1a1a1a"/><path d="M3 5.5H8" stroke="#1a1a1a" stroke-width="1.4"/><path d="M8 7.5Q9.5 7 10.5 9.5L11.5 12Q12.3 13.5 14 12.5M13.5 7.5L8.5 13" fill="none" stroke="#1a1a1a" stroke-width="1.5"/></svg>
<svg style="left:10px;top:186px" width="15" height="16"><rect x="0.5" y="0.5" width="14" height="15" rx="1" fill="#e8a868" stroke="#a0683a"/><rect x="2" y="2" width="11" height="5.5" fill="#d8e4f4" stroke="#8aa0c0" stroke-width="0.6"/><rect x="2" y="8.5" width="11" height="5.5" fill="#d8e4f4" stroke="#8aa0c0" stroke-width="0.6"/><path d="M6 5H9M6 11.5H9" stroke="#4a6a9a" stroke-width="1.2"/></svg>
<svg style="left:93px;top:186px" width="17" height="16"><defs><linearGradient id="fog" x1="0" y1="0" x2="0" y2="1"><stop offset="0" stop-color="#fae6a8"/><stop offset="1" stop-color="#d8a048"/></linearGradient></defs><path d="M0.5 2.5H6L7.5 0.5H15.5V14.5H0.5Z" fill="#c89040" stroke="#a87028" stroke-width="0.6"/><path d="M0.5 4H15.5V15.5H0.5Z" fill="url(#fog)" stroke="#b88838" stroke-width="0.6"/></svg>
<svg style="left:181px;top:187px" width="12" height="16"><path d="M0.5 0.5H8L11.5 4V15.5H0.5Z" fill="#fafafa" stroke="#9a9a9a"/><path d="M8 0.5V4H11.5" fill="#e8e8e8" stroke="#9a9a9a" stroke-width="0.8"/><rect x="2" y="2" width="3" height="1.5" fill="#999"/><g fill="#a0a0a0"><rect x="2.5" y="7" width="2" height="2"/><rect x="5.5" y="7" width="2" height="2"/><rect x="8.5" y="7" width="2" height="2"/><rect x="2.5" y="10" width="2" height="2"/><rect x="5.5" y="10" width="2" height="2"/><rect x="8.5" y="10" width="2" height="2"/><rect x="2.5" y="13" width="2" height="1.5"/><rect x="5.5" y="13" width="2" height="1.5"/><rect x="8.5" y="13" width="2" height="1.5"/></g></svg>
<div style="left:278px;top:104px;width:240px;height:519px;background:#ececec;border:1px solid #c6c6c6"></div>
<svg style="left:284px;top:110px" width="16.0" height="15.0" viewBox="0 0 16 15"><rect x="0" y="0" width="4" height="4" fill="#ec5a3e"/><path d="M2 0.5V3.5M0.5 2H3.5" stroke="#f9b09a" stroke-width="0.7"/><path d="M0 3.8H4" stroke="#c23c22" stroke-width="0.5"/><rect x="4" y="2.2" width="4" height="4" fill="#ec5a3e"/><path d="M6 2.7V5.7M4.5 4.2H7.5" stroke="#f9b09a" stroke-width="0.7"/><path d="M4 6.0H8" stroke="#c23c22" stroke-width="0.5"/><rect x="8" y="2.2" width="4" height="4" fill="#ec5a3e"/><path d="M10 2.7V5.7M8.5 4.2H11.5" stroke="#f9b09a" stroke-width="0.7"/><path d="M8 6.0H12" stroke="#c23c22" stroke-width="0.5"/><rect x="0" y="6.2" width="4" height="4" fill="#3f71c4"/><path d="M2 6.7V9.7M0.5 8.2H3.5" stroke="#a9c6ee" stroke-width="0.7"/><path d="M0 10.0H4" stroke="#28559e" stroke-width="0.5"/><rect x="4" y="6.2" width="4" height="4" fill="#ec5a3e"/><path d="M6 6.7V9.7M4.5 8.2H7.5" stroke="#f9b09a" stroke-width="0.7"/><path d="M4 10.0H8" stroke="#c23c22" stroke-width="0.5"/><rect x="8" y="6.2" width="4" height="4" fill="#3f71c4"/><path d="M10 6.7V9.7M8.5 8.2H11.5" stroke="#a9c6ee" stroke-width="0.7"/><path d="M8 10.0H12" stroke="#28559e" stroke-width="0.5"/><rect x="0" y="10.2" width="4" height="4" fill="#3f71c4"/><path d="M2 10.7V13.7M0.5 12.2H3.5" stroke="#a9c6ee" stroke-width="0.7"/><path d="M0 14.0H4" stroke="#28559e" stroke-width="0.5"/><rect x="4" y="10.2" width="4" height="4" fill="#3f71c4"/><path d="M6 10.7V13.7M4.5 12.2H7.5" stroke="#a9c6ee" stroke-width="0.7"/><path d="M4 14.0H8" stroke="#28559e" stroke-width="0.5"/><rect x="8" y="10.2" width="4" height="4" fill="#3f71c4"/><path d="M10 10.7V13.7M8.5 12.2H11.5" stroke="#a9c6ee" stroke-width="0.7"/><path d="M8 14.0H12" stroke="#28559e" stroke-width="0.5"/><rect x="12" y="10.2" width="4" height="4" fill="#3f71c4"/><path d="M14 10.7V13.7M12.5 12.2H15.5" stroke="#a9c6ee" stroke-width="0.7"/><path d="M12 14.0H16" stroke="#28559e" stroke-width="0.5"/><rect x="0" y="13.6" width="16" height="0.9" fill="#24509a"/></svg>
<div style="left:282px;top:130px;width:236px;height:492px;background:#f0f0f0;border-top:1px solid #dcdcdc"></div>
<div class="t" style="left:290px;top:136px;color:#000;font-size:11.5px">№</div>
<div style="left:290px;top:151px;width:65px;height:21px;background:#fff;border:1px solid #acacac"></div>
<div class="t" style="left:294px;top:155px;color:#000;font-size:11.5px">1</div>
<div class="t" style="left:360px;top:136px;color:#000;font-size:11px;letter-spacing:-0.1px">Обоснование:</div>
<div style="left:360px;top:151px;width:160px;height:21px;background:#fff;border:1px solid #acacac"></div>
<div class="t" style="left:364px;top:155px;color:#000;font-size:11.5px;font-weight:bold;letter-spacing:0.3px">ФЕРр65-30-1</div>
<div class="t" style="left:290px;top:187px;color:#000;font-size:11px;letter-spacing:-0.1px">Примечания:</div>
<div style="left:290px;top:202px;width:180px;height:21px;background:#fff;border:1px solid #acacac"></div>
<div class="t" style="left:475px;top:187px;color:#000;font-size:11px;letter-spacing:-0.1px">Измеритель:</div>
<div style="left:475px;top:202px;width:45px;height:21px;background:#fff;border:1px solid #acacac"></div>
<div class="t" style="left:479px;top:206px;color:#000;font-size:11px">100 м2</div>
<div style="left:283px;top:231px;width:139px;height:346px;background:#fff;border:1px solid #828282"></div>
<div style="left:286px;top:297px;width:134px;height:20px;background:#f3f3f3;border:1px solid #dedede"></div>
<div class="t" style="left:308px;top:237px;color:#000">Физобъем</div>
<div class="t" style="left:308px;top:258px;color:#000">Вид работ</div>
<svg style="left:294px;top:262px" width="6" height="6"><path d="M5.5 0.5V5.5H0.5Z" fill="#333"/></svg>
<div class="t" style="left:327px;top:279px;color:#000">К-ты к НР и СП</div>
<div class="t" style="left:308px;top:300px;color:#000">Коэффициенты</div>
<svg style="left:294px;top:304px" width="6" height="6"><path d="M5.5 0.5V5.5H0.5Z" fill="#333"/></svg>
<div class="t" style="left:327px;top:321px;color:#000">Сводка</div>
<div class="t" style="left:308px;top:342px;color:#000">Индексы</div>
<div class="t" style="left:308px;top:363px;color:#000">Прочее</div>
<div class="t" style="left:308px;top:384px;color:#000">Итоги</div>
<div class="t" style="left:308px;top:405px;color:#000">Состав затрат</div>
<div class="t" style="left:308px;top:426px;color:#000">Состав работ</div>
<div class="t" style="left:308px;top:447px;color:#000">Комментарии</div>
<div class="t" style="left:308px;top:468px;color:#000">Гиперссылки</div>
<div style="left:426px;top:231px;width:90px;height:346px;background:#fff"></div>
<div style="left:426px;top:231px;width:90px;height:20px;background:#7b7b7b"></div>
<div class="t" style="left:432px;top:234px;color:#000;font-weight:bold;font-size:11px;letter-spacing:0.5px;-webkit-text-stroke:0.25px #000">Коэффициент</div>
<div style="left:426px;top:251px;width:90px;height:26px;background:linear-gradient(#f3f6fa,#dfe7f1);border-bottom:1px solid #b9c7d8"></div>
<svg style="left:432px;top:256px" width="16" height="16"><rect x="0.5" y="6.5" width="14" height="8" fill="#f2f2f2" stroke="#9a9a9a"/><path d="M3 10H12M3 12.5H12" stroke="#a8a8a8"/><circle cx="5.5" cy="5" r="4" fill="#d8d8d8" stroke="#8a8a8a"/><path d="M3.5 5H7.5" stroke="#666" stroke-width="1.3"/></svg>
<div class="t" style="left:453px;top:259px;color:#9a9a9a;font-size:13px;line-height:14px">К</div>
<div class="t" style="left:460px;top:253px;color:#9a9a9a;font-size:12px;line-height:12px">%</div>
<div style="left:477px;top:255px;width:1px;height:18px;background:#c2cfdf"></div>
<svg style="left:485px;top:257px" width="14" height="13"><path d="M0.5 1.5H6.5V11.5H0.5ZM7.5 1.5H13.5V11.5H7.5Z" fill="#fafafa" stroke="#7a8aa0"/><path d="M2 4H5M2 6H5M2 8H5M9 4H12M9 6H12M9 8H12" stroke="#9aa4b4"/><path d="M0.5 12.5H13.5" stroke="#7a8aa0"/></svg>
<div class="t" style="left:504px;top:257px;color:#334">С</div>
<div style="left:426px;top:277px;width:90px;height:37px;background:linear-gradient(#f3f6fa,#e1e8f1);border-bottom:1px solid #b9c7d8"></div>
<div style="left:445px;top:277px;width:1px;height:37px;background:#c5d0dd"></div>
<div style="left:462px;top:277px;width:1px;height:37px;background:#c5d0dd"></div>
<div style="left:479px;top:277px;width:1px;height:37px;background:#c5d0dd"></div>
<div class="t" style="left:426px;top:281px;width:19px;text-align:center;line-height:13px;font-size:11px;color:#000">У<br>р</div>
<div class="t" style="left:446px;top:281px;width:16px;text-align:center;line-height:13px;font-size:11px;color:#000">Б<br>Ц</div>
<div class="t" style="left:463px;top:281px;width:16px;text-align:center;line-height:13px;font-size:11px;color:#000">Т<br>Ц</div>
<div class="t" style="left:495px;top:281px;line-height:13px;font-size:11px;color:#000">Обосн.</div>
<div style="left:293px;top:584px;width:143px;height:23px;background:#f4f4f4;border:1px solid #dadada"></div>
<div class="t" style="left:293px;top:589px;width:143px;text-align:center;color:#a0a0a0;font-size:11px">Предыдущая позиция</div>
<div style="left:443px;top:584px;width:80px;height:23px;background:linear-gradient(#f6f6f6,#e3e3e3);border:1px solid #acacac;border-radius:2px"></div>
<div class="t" style="left:460px;top:589px;color:#000;font-size:11px">Следующая позиция</div>
<div style="left:512px;top:96px;width:860px;height:598px;background:#7b9bc9;border-top:1px solid #5b79a5;border-bottom:1px solid #6581ad"></div>
<svg style="left:518px;top:102px" width="16.0" height="15.0" viewBox="0 0 16 15"><rect x="0" y="0" width="4" height="4" fill="#ec5a3e"/><path d="M2 0.5V3.5M0.5 2H3.5" stroke="#f9b09a" stroke-width="0.7"/><path d="M0 3.8H4" stroke="#c23c22" stroke-width="0.5"/><rect x="4" y="2.2" width="4" height="4" fill="#ec5a3e"/><path d="M6 2.7V5.7M4.5 4.2H7.5" stroke="#f9b09a" stroke-width="0.7"/><path d="M4 6.0H8" stroke="#c23c22" stroke-width="0.5"/><rect x="8" y="2.2" width="4" height="4" fill="#ec5a3e"/><path d="M10 2.7V5.7M8.5 4.2H11.5" stroke="#f9b09a" stroke-width="0.7"/><path d="M8 6.0H12" stroke="#c23c22" stroke-width="0.5"/><rect x="0" y="6.2" width="4" height="4" fill="#3f71c4"/><path d="M2 6.7V9.7M0.5 8.2H3.5" stroke="#a9c6ee" stroke-width="0.7"/><path d="M0 10.0H4" stroke="#28559e" stroke-width="0.5"/><rect x="4" y="6.2" width="4" height="4" fill="#ec5a3e"/><path d="M6 6.7V9.7M4.5 8.2H7.5" stroke="#f9b09a" stroke-width="0.7"/><path d="M4 10.0H8" stroke="#c23c22" stroke-width="0.5"/><rect x="8" y="6.2" width="4" height="4" fill="#3f71c4"/><path d="M10 6.7V9.7M8.5 8.2H11.5" stroke="#a9c6ee" stroke-width="0.7"/><path d="M8 10.0H12" stroke="#28559e" stroke-width="0.5"/><rect x="0" y="10.2" width="4" height="4" fill="#3f71c4"/><path d="M2 10.7V13.7M0.5 12.2H3.5" stroke="#a9c6ee" stroke-width="0.7"/><path d="M0 14.0H4" stroke="#28559e" stroke-width="0.5"/><rect x="4" y="10.2" width="4" height="4" fill="#3f71c4"/><path d="M6 10.7V13.7M4.5 12.2H7.5" stroke="#a9c6ee" stroke-width="0.7"/><path d="M4 14.0H8" stroke="#28559e" stroke-width="0.5"/><rect x="8" y="10.2" width="4" height="4" fill="#3f71c4"/><path d="M10 10.7V13.7M8.5 12.2H11.5" stroke="#a9c6ee" stroke-width="0.7"/><path d="M8 14.0H12" stroke="#28559e" stroke-width="0.5"/><rect x="12" y="10.2" width="4" height="4" fill="#3f71c4"/><path d="M14 10.7V13.7M12.5 12.2H15.5" stroke="#a9c6ee" stroke-width="0.7"/><path d="M12 14.0H16" stroke="#28559e" stroke-width="0.5"/><rect x="0" y="13.6" width="16" height="0.9" fill="#24509a"/></svg>
<div class="t" style="left:879px;top:101px;font-size:15px;line-height:18px;color:#1a1a1a">Справочник: Коэффициенты</div>
<div style="left:516px;top:122px;width:850px;height:1px;background:#6a86b0"></div>
<div style="left:516px;top:123px;width:850px;height:97px;background:linear-gradient(#f5f8fc,#eaf0f8 50%,#dfe7f2)"></div>
<div style="left:516px;top:220px;width:850px;height:1px;background:#a9bad0"></div>
<div style="left:516px;top:221px;width:850px;height:3px;background:#cfdbe9"></div>
<div style="left:843px;top:127px;width:1px;height:90px;background:linear-gradient(rgba(180,195,215,0),#c2cfdf 15%,#c2cfdf 85%,rgba(180,195,215,0))"></div>
<div style="left:1066px;top:127px;width:1px;height:90px;background:linear-gradient(rgba(180,195,215,0),#c2cfdf 15%,#c2cfdf 85%,rgba(180,195,215,0))"></div>
<div style="left:1235px;top:127px;width:1px;height:90px;background:linear-gradient(rgba(180,195,215,0),#c2cfdf 15%,#c2cfdf 85%,rgba(180,195,215,0))"></div>
<div style="left:1341px;top:127px;width:1px;height:90px;background:linear-gradient(rgba(180,195,215,0),#c2cfdf 15%,#c2cfdf 85%,rgba(180,195,215,0))"></div>
<div style="left:694px;top:132px;width:1px;height:60px;background:#c8d4e2"></div>
<div style="left:781px;top:132px;width:1px;height:60px;background:#c8d4e2"></div>
<div style="left:526px;top:128px;width:165px;height:23px;background:#eef3f9;border:1px solid #a7b8cd"></div>
<div style="left:673px;top:129px;width:17px;height:21px;background:linear-gradient(#f1f5fa,#dce5f0);border-left:1px solid #b9c7d8"></div>
<svg style="left:678px;top:137px" width="7" height="4"><path d="M0 0H7L3.5 4Z" fill="#444"/></svg>
<svg style="left:527px;top:158px" width="13" height="13"><rect x="0.5" y="0.5" width="12" height="12" fill="#f1f4f8" stroke="#b8c2ce"/></svg>
<div class="t" style="left:547px;top:157px;color:#1e2d42">С учетом регистра</div>
<svg style="left:527px;top:181px" width="13" height="13"><rect x="0.5" y="0.5" width="12" height="12" fill="#f1f4f8" stroke="#b8c2ce"/></svg>
<div class="t" style="left:547px;top:180px;color:#1e2d42">Точное совпадение слов</div>
<svg style="left:703px;top:133px" width="13" height="13"><rect x="0.5" y="0.5" width="12" height="12" fill="#f1f4f8" stroke="#b8c2ce"/><path d="M2.8 6.4L5.2 9L10.2 3.2" fill="none" stroke="#445a78" stroke-width="1.8"/></svg>
<div class="t" style="left:724px;top:133px;color:#1e2d42">С начала</div>
<svg style="left:703px;top:157px" width="13" height="13"><rect x="0.5" y="0.5" width="12" height="12" fill="#f1f4f8" stroke="#b8c2ce"/></svg>
<div class="t" style="left:724px;top:157px;color:#1e2d42">Вперед</div>
<svg style="left:703px;top:181px" width="13" height="13"><rect x="0.5" y="0.5" width="12" height="12" fill="#f1f4f8" stroke="#b8c2ce"/></svg>
<div class="t" style="left:724px;top:181px;color:#1e2d42">Назад</div>
<svg style="left:796px;top:135px" width="30" height="26"><defs><linearGradient id="bg1" x1="0" x2="1"><stop offset="0" stop-color="#4a5a88"/><stop offset="0.35" stop-color="#c4d0ec"/><stop offset="1" stop-color="#3a4a7a"/></linearGradient></defs><g fill="url(#bg1)"><rect x="9" y="1" width="4" height="3.5" rx="1"/><rect x="16" y="1" width="4" height="3.5" rx="1"/><rect x="6" y="4" width="8" height="3.5"/><rect x="15" y="4" width="8" height="3.5"/><rect x="4" y="7" width="10" height="6.5"/><rect x="15" y="7" width="10" height="6.5"/><rect x="1" y="13" width="11" height="11.5" rx="1.5"/><rect x="17.5" y="13" width="11" height="11.5" rx="1.5"/></g><rect x="12" y="13" width="5" height="2" fill="#1a2448"/><path d="M1.5 21.5H11.5M18 21.5H28" stroke="#24305a" stroke-width="1.6"/><path d="M14.5 4V13.5" stroke="#2a3660" stroke-width="1"/></svg>
<div class="t" style="left:794px;top:170px;color:#1e2d42">Найти</div>
<div class="t" style="left:516px;top:203px;width:327px;text-align:center;color:#3b4b64">Поиск</div>
<svg style="left:869px;top:134px" width="32" height="28"><g fill="#eef0f3" stroke="#c5c9ce"><path d="M7 1H12V6H17V11H12V16H7V11H2V6H7Z"/><rect x="0.5" y="17.5" width="31" height="10"/></g><path d="M8 18V28M24 18V28M11 21H21M11 24H21" stroke="#c5c9ce"/></svg>
<div class="t" style="left:859px;top:170px;color:#a0a8b3">Добавить</div>
<svg style="left:923px;top:134px" width="16" height="14"><path d="M3 0H6V3H9V6H6V9H3V6H0V3H3Z" fill="#e6e8eb" stroke="#c6c9cd"/><rect x="6" y="7" width="9" height="6" fill="#e6e8eb" stroke="#c6c9cd"/></svg>
<div class="t" style="left:942px;top:133px;color:#a0a8b3">Добавить группу</div>
<svg style="left:923px;top:157px" width="16" height="16"><path d="M3 0H6V3H9V6H6V9H3V6H0V3H3Z" fill="#e6e8eb" stroke="#c6c9cd"/><rect x="3" y="9" width="8" height="6" fill="#e6e8eb" stroke="#c6c9cd"/><rect x="8" y="6" width="7" height="6" fill="#e6e8eb" stroke="#c6c9cd"/></svg>
<div class="t" style="left:942px;top:157px;color:#a0a8b3">Добавить подгруппу</div>
<div style="left:925px;top:186px;width:12px;height:3px;background:#c8cbd0"></div>
<div class="t" style="left:942px;top:181px;color:#a0a8b3">Удалить</div>
<div class="t" style="left:843px;top:203px;width:223px;text-align:center;color:#3b4b64">Вставка</div>
<svg style="left:1095px;top:133px" width="32" height="34"><path d="M1 7H29V27H17L15 29L13 27H1Z" fill="#4f6fae" stroke="#3a5290" stroke-width="0.8"/><path d="M3 5Q9 3 15 5V26Q9 24 3 25.5Z" fill="#fbfbfb" stroke="#9aa6b8" stroke-width="0.6"/><path d="M15 5Q21 3 27 5V25.5Q21 24 15 26Z" fill="#fbfbfb" stroke="#9aa6b8" stroke-width="0.6"/><path d="M5 8.0H13M17 8.0H25" stroke="#a9b0bb" stroke-width="0.8"/><path d="M5 10.2H13M17 10.2H25" stroke="#a9b0bb" stroke-width="0.8"/><path d="M5 12.4H13M17 12.4H25" stroke="#a9b0bb" stroke-width="0.8"/><path d="M5 14.600000000000001H13M17 14.600000000000001H25" stroke="#a9b0bb" stroke-width="0.8"/><path d="M5 16.8H13M17 16.8H25" stroke="#a9b0bb" stroke-width="0.8"/><path d="M5 19.0H13M17 19.0H25" stroke="#a9b0bb" stroke-width="0.8"/><path d="M5 21.200000000000003H13M17 21.200000000000003H25" stroke="#a9b0bb" stroke-width="0.8"/><path d="M5 23.400000000000002H13M17 23.400000000000002H25" stroke="#a9b0bb" stroke-width="0.8"/><rect x="0.5" y="0.5" width="10" height="10" fill="#f2f2f2" stroke="#7a7a80" stroke-width="0.8"/><path d="M3 2V9M8 2L3.5 5.5L8 9" stroke="#d01010" stroke-width="2" fill="none"/><circle cx="18" cy="21" r="3.2" fill="#c8c8c8" stroke="#777" stroke-width="0.6"/><circle cx="24" cy="20" r="3.2" fill="#c8c8c8" stroke="#777" stroke-width="0.6"/><path d="M12.5 31Q13 24 18 24.5Q23 24 23 31Z" fill="#3b68c8" stroke="#24489a" stroke-width="0.6"/><path d="M19 30Q19 23 24 23.5Q29 23 29 30Z" fill="#4cae3c" stroke="#2a7a2a" stroke-width="0.6"/></svg>
<div class="t" style="left:1086px;top:170px;color:#1e2d42">Пользов.</div>
<div style="left:1144px;top:128px;width:78px;height:72px;background:linear-gradient(#fdd86e,#fcd66b 70%,#fde08e);border:1px solid #d2ae5c;border-radius:3px"></div>
<svg style="left:1167px;top:133px" width="32" height="34"><path d="M1 7H29V27H17L15 29L13 27H1Z" fill="#4f6fae" stroke="#3a5290" stroke-width="0.8"/><path d="M3 5Q9 3 15 5V26Q9 24 3 25.5Z" fill="#fbfbfb" stroke="#9aa6b8" stroke-width="0.6"/><path d="M15 5Q21 3 27 5V25.5Q21 24 15 26Z" fill="#fbfbfb" stroke="#9aa6b8" stroke-width="0.6"/><path d="M5 8.0H13M17 8.0H25" stroke="#a9b0bb" stroke-width="0.8"/><path d="M5 10.2H13M17 10.2H25" stroke="#a9b0bb" stroke-width="0.8"/><path d="M5 12.4H13M17 12.4H25" stroke="#a9b0bb" stroke-width="0.8"/><path d="M5 14.600000000000001H13M17 14.600000000000001H25" stroke="#a9b0bb" stroke-width="0.8"/><path d="M5 16.8H13M17 16.8H25" stroke="#a9b0bb" stroke-width="0.8"/><path d="M5 19.0H13M17 19.0H25" stroke="#a9b0bb" stroke-width="0.8"/><path d="M5 21.200000000000003H13M17 21.200000000000003H25" stroke="#a9b0bb" stroke-width="0.8"/><path d="M5 23.400000000000002H13M17 23.400000000000002H25" stroke="#a9b0bb" stroke-width="0.8"/><rect x="0.5" y="0.5" width="10" height="10" fill="#f2f2f2" stroke="#7a7a80" stroke-width="0.8"/><path d="M3 2V9M8 2L3.5 5.5L8 9" stroke="#d01010" stroke-width="2" fill="none"/><path d="M16 23L12 32L16 30.5L19 26M24 23L28 32L24 30.5L21 26" fill="#e85a2a" stroke="#b8401a" stroke-width="0.5"/><circle cx="20" cy="19" r="6" fill="#f0602a" stroke="#c8481a" stroke-width="0.8"/><circle cx="20" cy="19" r="2.6" fill="#ffd070"/></svg>
<div class="t" style="left:1152px;top:170px;color:#1e2d42">Эталонный</div>
<div class="t" style="left:1066px;top:203px;width:169px;text-align:center;color:#3b4b64">Используемый справочник</div>
<svg style="left:1249px;top:133px" width="12" height="14"><path d="M3 0L9 9M9 0L3 9" stroke="#c0c4c8" stroke-width="1.4"/><circle cx="3" cy="11" r="2.2" fill="none" stroke="#c0c4c8" stroke-width="1.3"/><circle cx="9" cy="11" r="2.2" fill="none" stroke="#c0c4c8" stroke-width="1.3"/></svg>
<div class="t" style="left:1265px;top:133px;color:#a0a8b3">Вырезать</div>
<svg style="left:1246px;top:157px" width="16" height="15"><path d="M0.5 0.5H6L8.5 3V10.5H0.5Z" fill="#fff" stroke="#5a6a88"/><path d="M2 3.5H5M2 5.5H7M2 7.5H7" stroke="#8a9ab8" stroke-width="0.9"/><path d="M6.5 4.5H12L15.5 8V14.5H6.5Z" fill="#fff" stroke="#2a4a8a"/><path d="M12 4.5V8H15.5" fill="none" stroke="#2a4a8a" stroke-width="0.8"/><path d="M8 9H14M8 11H14M8 13H14" stroke="#3a62b0" stroke-width="1"/></svg>
<div class="t" style="left:1265px;top:157px;color:#1e2d42">Копировать</div>
<svg style="left:1246px;top:181px" width="16" height="15"><rect x="0.5" y="1.5" width="10" height="12" fill="#eceef0" stroke="#c8cbcf"/><rect x="6.5" y="5.5" width="9" height="9" fill="#f4f5f6" stroke="#c8cbcf"/></svg>
<div class="t" style="left:1265px;top:181px;color:#a0a8b3">Вставить</div>
<div class="t" style="left:1235px;top:203px;width:106px;text-align:center;color:#3b4b64">Буфер обмена</div>
<div style="left:516px;top:224px;width:850px;height:36px;background:linear-gradient(#f5f8fc,#e3eaf3);border-bottom:1px solid #b5c3d5"></div>
<div style="left:532px;top:224px;width:1px;height:35px;background:#c3cedb"></div>
<div style="left:549px;top:224px;width:1px;height:35px;background:#c3cedb"></div>
<div style="left:620px;top:224px;width:1px;height:35px;background:#c3cedb"></div>
<div style="left:1060px;top:224px;width:1px;height:35px;background:#c3cedb"></div>
<div style="left:1078px;top:224px;width:1px;height:35px;background:#c3cedb"></div>
<div style="left:1140px;top:224px;width:1px;height:35px;background:#c3cedb"></div>
<div style="left:1202px;top:224px;width:1px;height:35px;background:#c3cedb"></div>
<div style="left:1298px;top:224px;width:1px;height:35px;background:#c3cedb"></div>
<div style="left:1360px;top:224px;width:1px;height:35px;background:#c3cedb"></div>
<div style="left:1123px;top:241px;width:1px;height:18px;background:#c3cedb"></div>
<div style="left:1185px;top:241px;width:1px;height:18px;background:#c3cedb"></div>
<div style="left:1247px;top:241px;width:1px;height:18px;background:#c3cedb"></div>
<div style="left:1264px;top:241px;width:1px;height:18px;background:#c3cedb"></div>
<div style="left:1281px;top:241px;width:1px;height:18px;background:#c3cedb"></div>
<div style="left:1343px;top:241px;width:1px;height:18px;background:#c3cedb"></div>
<div style="left:1078px;top:241px;width:288px;height:1px;background:#c3cedb"></div>
<div class="t" style="left:516px;top:227px;width:16px;line-height:13px;font-size:11px;color:#000;text-align:center;letter-spacing:-0.1px">Б<br>Ц</div>
<div class="t" style="left:532px;top:227px;width:17px;line-height:13px;font-size:11px;color:#000;text-align:center;letter-spacing:-0.1px">Т<br>Ц</div>
<div class="t" style="left:549px;top:227px;width:71px;line-height:13px;font-size:11px;color:#000;text-align:center;letter-spacing:-0.1px">Обосн.</div>
<div class="t" style="left:620px;top:227px;width:440px;line-height:13px;font-size:11px;color:#000;text-align:center;letter-spacing:-0.1px">Наименование коэффициента</div>
<div class="t" style="left:1060px;top:227px;width:18px;line-height:13px;font-size:11px;color:#000;text-align:center;letter-spacing:-0.1px">К<br>%</div>
<div class="t" style="left:1078px;top:227px;width:62px;line-height:13px;font-size:11px;color:#000;text-align:center;letter-spacing:-0.1px">ПЗ</div>
<div class="t" style="left:1140px;top:227px;width:62px;line-height:13px;font-size:11px;color:#000;text-align:center;letter-spacing:-0.1px">ОЗП</div>
<div class="t" style="left:1202px;top:227px;width:96px;line-height:13px;font-size:11px;color:#000;text-align:center;letter-spacing:-0.1px">ЭМ</div>
<div class="t" style="left:1298px;top:227px;width:62px;line-height:13px;font-size:11px;color:#000;text-align:center;letter-spacing:-0.1px">ЗПМ</div>
<div class="t" style="left:1078px;top:244px;width:45px;line-height:13px;font-size:11px;color:#000;text-align:center;letter-spacing:-0.1px">Знач.</div>
<div class="t" style="left:1123px;top:244px;width:17px;line-height:13px;font-size:11px;color:#000;text-align:center;letter-spacing:-0.1px">-></div>
<div class="t" style="left:1140px;top:244px;width:45px;line-height:13px;font-size:11px;color:#000;text-align:center;letter-spacing:-0.1px">Знач.</div>
<div class="t" style="left:1185px;top:244px;width:17px;line-height:13px;font-size:11px;color:#000;text-align:center;letter-spacing:-0.1px">-></div>
<div class="t" style="left:1202px;top:244px;width:45px;line-height:13px;font-size:11px;color:#000;text-align:center;letter-spacing:-0.1px">Знач.</div>
<div class="t" style="left:1247px;top:244px;width:17px;line-height:13px;font-size:11px;color:#000;text-align:center;letter-spacing:-0.1px">-></div>
<div class="t" style="left:1264px;top:244px;width:17px;line-height:13px;font-size:11px;color:#000;text-align:center;letter-spacing:-0.1px">Р</div>
<div class="t" style="left:1281px;top:244px;width:17px;line-height:13px;font-size:11px;color:#000;text-align:center;letter-spacing:-0.1px">Ч</div>
<div class="t" style="left:1298px;top:244px;width:45px;line-height:13px;font-size:11px;color:#000;text-align:center;letter-spacing:-0.1px">Знач.</div>
<div class="t" style="left:1343px;top:244px;width:17px;line-height:13px;font-size:11px;color:#000;text-align:center;letter-spacing:-0.1px">-></div>
<div style="left:516px;top:260px;width:850px;height:61px;background:#fff"></div>
<div style="left:532px;top:259px;width:1px;height:62px;background:#cdcdcd"></div>
<div style="left:549px;top:259px;width:1px;height:62px;background:#cdcdcd"></div>
<div style="left:620px;top:259px;width:1px;height:62px;background:#cdcdcd"></div>
<div style="left:1060px;top:259px;width:1px;height:62px;background:#cdcdcd"></div>
<div style="left:1078px;top:259px;width:1px;height:62px;background:#cdcdcd"></div>
<div style="left:1123px;top:259px;width:1px;height:62px;background:#cdcdcd"></div>
<div style="left:1140px;top:259px;width:1px;height:62px;background:#cdcdcd"></div>
<div style="left:1185px;top:259px;width:1px;height:62px;background:#cdcdcd"></div>
<div style="left:1202px;top:259px;width:1px;height:62px;background:#cdcdcd"></div>
<div style="left:1247px;top:259px;width:1px;height:62px;background:#cdcdcd"></div>
<div style="left:1264px;top:259px;width:1px;height:62px;background:#cdcdcd"></div>
<div style="left:1281px;top:259px;width:1px;height:62px;background:#cdcdcd"></div>
<div style="left:1298px;top:259px;width:1px;height:62px;background:#cdcdcd"></div>
<div style="left:1343px;top:259px;width:1px;height:62px;background:#cdcdcd"></div>
<div style="left:1360px;top:259px;width:1px;height:62px;background:#cdcdcd"></div>
<div style="left:516px;top:320px;width:850px;height:1px;background:#cdcdcd"></div>
<svg style="left:518px;top:264px" width="13" height="13"><rect x="0.5" y="0.5" width="12" height="12" fill="#e7e7e7" stroke="#c4c4c4"/><path d="M2.8 6.4L5.2 9L10.2 3.2" fill="none" stroke="#7a7a7a" stroke-width="1.8"/></svg>
<svg style="left:536px;top:264px" width="13" height="13"><rect x="0.5" y="0.5" width="12" height="12" fill="#e7e7e7" stroke="#c4c4c4"/><path d="M2.8 6.4L5.2 9L10.2 3.2" fill="none" stroke="#7a7a7a" stroke-width="1.8"/></svg>
<div class="g" style="left:549px;top:265px;width:68px;text-align:right;letter-spacing:0.15px">Прил.3,<br>Табл.3, п.7</div>
<div class="g" style="left:622px;top:265px;letter-spacing:0.05px">Производство ремонтно-строительных работ осуществляется в закрытых<br>сооружениях или помещениях (за исключением подземных сооружений<br>специального назначения), верхняя отметка перекрытия которых находится ниже<br>3 м от поверхности земли.</div>
<div class="g" style="left:1060px;top:265px;width:18px;text-align:center">К</div>
<svg style="left:1126px;top:264px" width="13" height="13"><rect x="0.5" y="0.5" width="12" height="12" fill="#fff" stroke="#555"/></svg>
<div class="g" style="left:1140px;top:265px;width:43px;text-align:right;letter-spacing:0.3px">1,1</div>
<svg style="left:1188px;top:264px" width="13" height="13"><rect x="0.5" y="0.5" width="12" height="12" fill="#fff" stroke="#555"/><path d="M2.8 6.4L5.2 9L10.2 3.2" fill="none" stroke="#000" stroke-width="2.2"/></svg>
<div class="g" style="left:1202px;top:265px;width:44px;text-align:right;letter-spacing:0.3px">1,1</div>
<svg style="left:1250px;top:264px" width="13" height="13"><rect x="0.5" y="0.5" width="12" height="12" fill="#fff" stroke="#555"/><path d="M2.8 6.4L5.2 9L10.2 3.2" fill="none" stroke="#000" stroke-width="2.2"/></svg>
<svg style="left:1267px;top:264px" width="13" height="13"><rect x="0.5" y="0.5" width="12" height="12" fill="#fff" stroke="#555"/><path d="M2.8 6.4L5.2 9L10.2 3.2" fill="none" stroke="#000" stroke-width="2.2"/></svg>
<svg style="left:1284px;top:264px" width="13" height="13"><rect x="0.5" y="0.5" width="12" height="12" fill="#fff" stroke="#555"/></svg>
<svg style="left:1346px;top:264px" width="13" height="13"><rect x="0.5" y="0.5" width="12" height="12" fill="#fff" stroke="#555"/><path d="M2.8 6.4L5.2 9L10.2 3.2" fill="none" stroke="#000" stroke-width="2.2"/></svg>
<svg style="left:1242px;top:260px" width="100" height="6"><circle cx="3" cy="3" r="2.3" fill="#137a13"/><path d="M3 3H96" stroke="#137a13" stroke-width="2"/><path d="M93 0.2L99 3L93 5.8Z" fill="#137a13"/></svg>
<div style="left:516px;top:321px;width:850px;height:35px;background:linear-gradient(#d8eafb,#c2def8 50%,#abd1f5)"></div>
<div style="left:532px;top:320px;width:1px;height:36px;background:#cdcdcd"></div>
<div style="left:549px;top:320px;width:1px;height:36px;background:#cdcdcd"></div>
<div style="left:620px;top:320px;width:1px;height:36px;background:#cdcdcd"></div>
<div style="left:1060px;top:320px;width:1px;height:36px;background:#cdcdcd"></div>
<div style="left:1078px;top:320px;width:1px;height:36px;background:#cdcdcd"></div>
<div style="left:1123px;top:320px;width:1px;height:36px;background:#cdcdcd"></div>
<div style="left:1140px;top:320px;width:1px;height:36px;background:#cdcdcd"></div>
<div style="left:1185px;top:320px;width:1px;height:36px;background:#cdcdcd"></div>
<div style="left:1202px;top:320px;width:1px;height:36px;background:#cdcdcd"></div>
<div style="left:1247px;top:320px;width:1px;height:36px;background:#cdcdcd"></div>
<div style="left:1264px;top:320px;width:1px;height:36px;background:#cdcdcd"></div>
<div style="left:1281px;top:320px;width:1px;height:36px;background:#cdcdcd"></div>
<div style="left:1298px;top:320px;width:1px;height:36px;background:#cdcdcd"></div>
<div style="left:1343px;top:320px;width:1px;height:36px;background:#cdcdcd"></div>
<div style="left:1360px;top:320px;width:1px;height:36px;background:#cdcdcd"></div>
<div style="left:516px;top:355px;width:850px;height:1px;background:#cdcdcd"></div>
<svg style="left:518px;top:325px" width="13" height="13"><rect x="0.5" y="0.5" width="12" height="12" fill="#e7e7e7" stroke="#c4c4c4"/><path d="M2.8 6.4L5.2 9L10.2 3.2" fill="none" stroke="#7a7a7a" stroke-width="1.8"/></svg>
<svg style="left:536px;top:325px" width="13" height="13"><rect x="0.5" y="0.5" width="12" height="12" fill="#e7e7e7" stroke="#c4c4c4"/><path d="M2.8 6.4L5.2 9L10.2 3.2" fill="none" stroke="#7a7a7a" stroke-width="1.8"/></svg>
<div class="g" style="left:549px;top:326px;width:68px;text-align:right;letter-spacing:0.15px">Прил.3,<br>Табл.3, п.8</div>
<div class="g" style="left:622px;top:326px;letter-spacing:0.05px">Производство ремонтно-строительных работ осуществляется в помещениях<br>высотой до 1,8 м.</div>
<div class="g" style="left:1060px;top:326px;width:18px;text-align:center">К</div>
<svg style="left:1126px;top:325px" width="13" height="13"><rect x="0.5" y="0.5" width="12" height="12" fill="#fff" stroke="#555"/></svg>
<div class="g" style="left:1140px;top:326px;width:43px;text-align:right;letter-spacing:0.3px">1,35</div>
<svg style="left:1188px;top:325px" width="13" height="13"><rect x="0.5" y="0.5" width="12" height="12" fill="#fff" stroke="#555"/><path d="M2.8 6.4L5.2 9L10.2 3.2" fill="none" stroke="#000" stroke-width="2.2"/></svg>
<div class="g" style="left:1202px;top:326px;width:44px;text-align:right;letter-spacing:0.3px">1,35</div>
<svg style="left:1250px;top:325px" width="13" height="13"><rect x="0.5" y="0.5" width="12" height="12" fill="#fff" stroke="#555"/><path d="M2.8 6.4L5.2 9L10.2 3.2" fill="none" stroke="#000" stroke-width="2.2"/></svg>
<svg style="left:1267px;top:325px" width="13" height="13"><rect x="0.5" y="0.5" width="12" height="12" fill="#fff" stroke="#555"/><path d="M2.8 6.4L5.2 9L10.2 3.2" fill="none" stroke="#000" stroke-width="2.2"/></svg>
<svg style="left:1284px;top:325px" width="13" height="13"><rect x="0.5" y="0.5" width="12" height="12" fill="#fff" stroke="#555"/></svg>
<svg style="left:1346px;top:325px" width="13" height="13"><rect x="0.5" y="0.5" width="12" height="12" fill="#fff" stroke="#555"/><path d="M2.8 6.4L5.2 9L10.2 3.2" fill="none" stroke="#000" stroke-width="2.2"/></svg>
<svg style="left:1242px;top:321px" width="100" height="6"><circle cx="3" cy="3" r="2.3" fill="#137a13"/><path d="M3 3H96" stroke="#137a13" stroke-width="2"/><path d="M93 0.2L99 3L93 5.8Z" fill="#137a13"/></svg>
<div style="left:620px;top:321px;width:441px;height:34px;border:1px dotted #222"></div>
<div style="left:516px;top:356px;width:850px;height:35px;background:#fff"></div>
<div style="left:532px;top:355px;width:1px;height:36px;background:#cdcdcd"></div>
<div style="left:549px;top:355px;width:1px;height:36px;background:#cdcdcd"></div>
<div style="left:620px;top:355px;width:1px;height:36px;background:#cdcdcd"></div>
<div style="left:1060px;top:355px;width:1px;height:36px;background:#cdcdcd"></div>
<div style="left:1078px;top:355px;width:1px;height:36px;background:#cdcdcd"></div>
<div style="left:1123px;top:355px;width:1px;height:36px;background:#cdcdcd"></div>
<div style="left:1140px;top:355px;width:1px;height:36px;background:#cdcdcd"></div>
<div style="left:1185px;top:355px;width:1px;height:36px;background:#cdcdcd"></div>
<div style="left:1202px;top:355px;width:1px;height:36px;background:#cdcdcd"></div>
<div style="left:1247px;top:355px;width:1px;height:36px;background:#cdcdcd"></div>
<div style="left:1264px;top:355px;width:1px;height:36px;background:#cdcdcd"></div>
<div style="left:1281px;top:355px;width:1px;height:36px;background:#cdcdcd"></div>
<div style="left:1298px;top:355px;width:1px;height:36px;background:#cdcdcd"></div>
<div style="left:1343px;top:355px;width:1px;height:36px;background:#cdcdcd"></div>
<div style="left:1360px;top:355px;width:1px;height:36px;background:#cdcdcd"></div>
<div style="left:516px;top:390px;width:850px;height:1px;background:#cdcdcd"></div>
<svg style="left:518px;top:360px" width="13" height="13"><rect x="0.5" y="0.5" width="12" height="12" fill="#e7e7e7" stroke="#c4c4c4"/><path d="M2.8 6.4L5.2 9L10.2 3.2" fill="none" stroke="#7a7a7a" stroke-width="1.8"/></svg>
<svg style="left:536px;top:360px" width="13" height="13"><rect x="0.5" y="0.5" width="12" height="12" fill="#e7e7e7" stroke="#c4c4c4"/><path d="M2.8 6.4L5.2 9L10.2 3.2" fill="none" stroke="#7a7a7a" stroke-width="1.8"/></svg>
<div class="g" style="left:549px;top:361px;width:68px;text-align:right;letter-spacing:0.15px">Прил.3,<br>Табл.3, п.9</div>
<div class="g" style="left:622px;top:361px;letter-spacing:0.05px">Производство ремонтно-строительных работ осуществляется в жилых помещениях<br>без расселения.</div>
<div class="g" style="left:1060px;top:361px;width:18px;text-align:center">К</div>
<svg style="left:1126px;top:360px" width="13" height="13"><rect x="0.5" y="0.5" width="12" height="12" fill="#fff" stroke="#555"/></svg>
<div class="g" style="left:1140px;top:361px;width:43px;text-align:right;letter-spacing:0.3px">1,5</div>
<svg style="left:1188px;top:360px" width="13" height="13"><rect x="0.5" y="0.5" width="12" height="12" fill="#fff" stroke="#555"/><path d="M2.8 6.4L5.2 9L10.2 3.2" fill="none" stroke="#000" stroke-width="2.2"/></svg>
<div class="g" style="left:1202px;top:361px;width:44px;text-align:right;letter-spacing:0.3px">1,5</div>
<svg style="left:1250px;top:360px" width="13" height="13"><rect x="0.5" y="0.5" width="12" height="12" fill="#fff" stroke="#555"/><path d="M2.8 6.4L5.2 9L10.2 3.2" fill="none" stroke="#000" stroke-width="2.2"/></svg>
<svg style="left:1267px;top:360px" width="13" height="13"><rect x="0.5" y="0.5" width="12" height="12" fill="#fff" stroke="#555"/><path d="M2.8 6.4L5.2 9L10.2 3.2" fill="none" stroke="#000" stroke-width="2.2"/></svg>
<svg style="left:1284px;top:360px" width="13" height="13"><rect x="0.5" y="0.5" width="12" height="12" fill="#fff" stroke="#555"/></svg>
<svg style="left:1346px;top:360px" width="13" height="13"><rect x="0.5" y="0.5" width="12" height="12" fill="#fff" stroke="#555"/><path d="M2.8 6.4L5.2 9L10.2 3.2" fill="none" stroke="#000" stroke-width="2.2"/></svg>
<svg style="left:1242px;top:356px" width="100" height="6"><circle cx="3" cy="3" r="2.3" fill="#137a13"/><path d="M3 3H96" stroke="#137a13" stroke-width="2"/><path d="M93 0.2L99 3L93 5.8Z" fill="#137a13"/></svg>
<div style="left:516px;top:391px;width:850px;height:61px;background:#fff"></div>
<div style="left:532px;top:390px;width:1px;height:62px;background:#cdcdcd"></div>
<div style="left:549px;top:390px;width:1px;height:62px;background:#cdcdcd"></div>
<div style="left:620px;top:390px;width:1px;height:62px;background:#cdcdcd"></div>
<div style="left:1060px;top:390px;width:1px;height:62px;background:#cdcdcd"></div>
<div style="left:1078px;top:390px;width:1px;height:62px;background:#cdcdcd"></div>
<div style="left:1123px;top:390px;width:1px;height:62px;background:#cdcdcd"></div>
<div style="left:1140px;top:390px;width:1px;height:62px;background:#cdcdcd"></div>
<div style="left:1185px;top:390px;width:1px;height:62px;background:#cdcdcd"></div>
<div style="left:1202px;top:390px;width:1px;height:62px;background:#cdcdcd"></div>
<div style="left:1247px;top:390px;width:1px;height:62px;background:#cdcdcd"></div>
<div style="left:1264px;top:390px;width:1px;height:62px;background:#cdcdcd"></div>
<div style="left:1281px;top:390px;width:1px;height:62px;background:#cdcdcd"></div>
<div style="left:1298px;top:390px;width:1px;height:62px;background:#cdcdcd"></div>
<div style="left:1343px;top:390px;width:1px;height:62px;background:#cdcdcd"></div>
<div style="left:1360px;top:390px;width:1px;height:62px;background:#cdcdcd"></div>
<div style="left:516px;top:451px;width:850px;height:1px;background:#cdcdcd"></div>
<svg style="left:518px;top:395px" width="13" height="13"><rect x="0.5" y="0.5" width="12" height="12" fill="#e7e7e7" stroke="#c4c4c4"/><path d="M2.8 6.4L5.2 9L10.2 3.2" fill="none" stroke="#7a7a7a" stroke-width="1.8"/></svg>
<svg style="left:536px;top:395px" width="13" height="13"><rect x="0.5" y="0.5" width="12" height="12" fill="#e7e7e7" stroke="#c4c4c4"/><path d="M2.8 6.4L5.2 9L10.2 3.2" fill="none" stroke="#7a7a7a" stroke-width="1.8"/></svg>
<div class="g" style="left:549px;top:396px;width:68px;text-align:right;letter-spacing:0.15px">Прил.3,<br>Табл.3,<br>п.10.1</div>
<div class="g" style="left:622px;top:396px;letter-spacing:0.05px">Производство ремонтно-строительных работ осуществляется в стесненных<br>условиях застроенной части населенных пунктов: отдельных конструктивных<br>элементов объектов капитального строительства (кроме указанных в п.п. 10.2 и<br>10.3), объектов капитального строительства в целом.</div>
<div class="g" style="left:1060px;top:396px;width:18px;text-align:center">К</div>
<svg style="left:1126px;top:395px" width="13" height="13"><rect x="0.5" y="0.5" width="12" height="12" fill="#fff" stroke="#555"/></svg>
<div class="g" style="left:1140px;top:396px;width:43px;text-align:right;letter-spacing:0.3px">1,15</div>
<svg style="left:1188px;top:395px" width="13" height="13"><rect x="0.5" y="0.5" width="12" height="12" fill="#fff" stroke="#555"/><path d="M2.8 6.4L5.2 9L10.2 3.2" fill="none" stroke="#000" stroke-width="2.2"/></svg>
<div class="g" style="left:1202px;top:396px;width:44px;text-align:right;letter-spacing:0.3px">1,15</div>
<svg style="left:1250px;top:395px" width="13" height="13"><rect x="0.5" y="0.5" width="12" height="12" fill="#fff" stroke="#555"/><path d="M2.8 6.4L5.2 9L10.2 3.2" fill="none" stroke="#000" stroke-width="2.2"/></svg>
<svg style="left:1267px;top:395px" width="13" height="13"><rect x="0.5" y="0.5" width="12" height="12" fill="#fff" stroke="#555"/><path d="M2.8 6.4L5.2 9L10.2 3.2" fill="none" stroke="#000" stroke-width="2.2"/></svg>
<svg style="left:1284px;top:395px" width="13" height="13"><rect x="0.5" y="0.5" width="12" height="12" fill="#fff" stroke="#555"/></svg>
<svg style="left:1346px;top:395px" width="13" height="13"><rect x="0.5" y="0.5" width="12" height="12" fill="#fff" stroke="#555"/><path d="M2.8 6.4L5.2 9L10.2 3.2" fill="none" stroke="#000" stroke-width="2.2"/></svg>
<svg style="left:1242px;top:391px" width="100" height="6"><circle cx="3" cy="3" r="2.3" fill="#137a13"/><path d="M3 3H96" stroke="#137a13" stroke-width="2"/><path d="M93 0.2L99 3L93 5.8Z" fill="#137a13"/></svg>
<div style="left:516px;top:452px;width:850px;height:48px;background:#fff"></div>
<div style="left:532px;top:451px;width:1px;height:49px;background:#cdcdcd"></div>
<div style="left:549px;top:451px;width:1px;height:49px;background:#cdcdcd"></div>
<div style="left:620px;top:451px;width:1px;height:49px;background:#cdcdcd"></div>
<div style="left:1060px;top:451px;width:1px;height:49px;background:#cdcdcd"></div>
<div style="left:1078px;top:451px;width:1px;height:49px;background:#cdcdcd"></div>
<div style="left:1123px;top:451px;width:1px;height:49px;background:#cdcdcd"></div>
<div style="left:1140px;top:451px;width:1px;height:49px;background:#cdcdcd"></div>
<div style="left:1185px;top:451px;width:1px;height:49px;background:#cdcdcd"></div>
<div style="left:1202px;top:451px;width:1px;height:49px;background:#cdcdcd"></div>
<div style="left:1247px;top:451px;width:1px;height:49px;background:#cdcdcd"></div>
<div style="left:1264px;top:451px;width:1px;height:49px;background:#cdcdcd"></div>
<div style="left:1281px;top:451px;width:1px;height:49px;background:#cdcdcd"></div>
<div style="left:1298px;top:451px;width:1px;height:49px;background:#cdcdcd"></div>
<div style="left:1343px;top:451px;width:1px;height:49px;background:#cdcdcd"></div>
<div style="left:1360px;top:451px;width:1px;height:49px;background:#cdcdcd"></div>
<div style="left:516px;top:499px;width:850px;height:1px;background:#cdcdcd"></div>
<svg style="left:518px;top:456px" width="13" height="13"><rect x="0.5" y="0.5" width="12" height="12" fill="#e7e7e7" stroke="#c4c4c4"/><path d="M2.8 6.4L5.2 9L10.2 3.2" fill="none" stroke="#7a7a7a" stroke-width="1.8"/></svg>
<svg style="left:536px;top:456px" width="13" height="13"><rect x="0.5" y="0.5" width="12" height="12" fill="#e7e7e7" stroke="#c4c4c4"/><path d="M2.8 6.4L5.2 9L10.2 3.2" fill="none" stroke="#7a7a7a" stroke-width="1.8"/></svg>
<div class="g" style="left:549px;top:457px;width:68px;text-align:right;letter-spacing:0.15px">Прил.3,<br>Табл.3,<br>п.10.2</div>
<div class="g" style="left:622px;top:457px;letter-spacing:0.05px">Производство ремонтно-строительных работ осуществляется в стесненных<br>условиях застроенной части населенных пунктов: кровель средней сложности и<br>сложных.</div>
<div class="g" style="left:1060px;top:457px;width:18px;text-align:center">К</div>
<svg style="left:1126px;top:456px" width="13" height="13"><rect x="0.5" y="0.5" width="12" height="12" fill="#fff" stroke="#555"/></svg>
<div class="g" style="left:1140px;top:457px;width:43px;text-align:right;letter-spacing:0.3px">1,25</div>
<svg style="left:1188px;top:456px" width="13" height="13"><rect x="0.5" y="0.5" width="12" height="12" fill="#fff" stroke="#555"/><path d="M2.8 6.4L5.2 9L10.2 3.2" fill="none" stroke="#000" stroke-width="2.2"/></svg>
<div class="g" style="left:1202px;top:457px;width:44px;text-align:right;letter-spacing:0.3px">1,25</div>
<svg style="left:1250px;top:456px" width="13" height="13"><rect x="0.5" y="0.5" width="12" height="12" fill="#fff" stroke="#555"/><path d="M2.8 6.4L5.2 9L10.2 3.2" fill="none" stroke="#000" stroke-width="2.2"/></svg>
<svg style="left:1267px;top:456px" width="13" height="13"><rect x="0.5" y="0.5" width="12" height="12" fill="#fff" stroke="#555"/><path d="M2.8 6.4L5.2 9L10.2 3.2" fill="none" stroke="#000" stroke-width="2.2"/></svg>
<svg style="left:1284px;top:456px" width="13" height="13"><rect x="0.5" y="0.5" width="12" height="12" fill="#fff" stroke="#555"/></svg>
<svg style="left:1346px;top:456px" width="13" height="13"><rect x="0.5" y="0.5" width="12" height="12" fill="#fff" stroke="#555"/><path d="M2.8 6.4L5.2 9L10.2 3.2" fill="none" stroke="#000" stroke-width="2.2"/></svg>
<svg style="left:1242px;top:452px" width="100" height="6"><circle cx="3" cy="3" r="2.3" fill="#137a13"/><path d="M3 3H96" stroke="#137a13" stroke-width="2"/><path d="M93 0.2L99 3L93 5.8Z" fill="#137a13"/></svg>
<div style="left:516px;top:500px;width:850px;height:48px;background:#fff"></div>
<div style="left:532px;top:499px;width:1px;height:49px;background:#cdcdcd"></div>
<div style="left:549px;top:499px;width:1px;height:49px;background:#cdcdcd"></div>
<div style="left:620px;top:499px;width:1px;height:49px;background:#cdcdcd"></div>
<div style="left:1060px;top:499px;width:1px;height:49px;background:#cdcdcd"></div>
<div style="left:1078px;top:499px;width:1px;height:49px;background:#cdcdcd"></div>
<div style="left:1123px;top:499px;width:1px;height:49px;background:#cdcdcd"></div>
<div style="left:1140px;top:499px;width:1px;height:49px;background:#cdcdcd"></div>
<div style="left:1185px;top:499px;width:1px;height:49px;background:#cdcdcd"></div>
<div style="left:1202px;top:499px;width:1px;height:49px;background:#cdcdcd"></div>
<div style="left:1247px;top:499px;width:1px;height:49px;background:#cdcdcd"></div>
<div style="left:1264px;top:499px;width:1px;height:49px;background:#cdcdcd"></div>
<div style="left:1281px;top:499px;width:1px;height:49px;background:#cdcdcd"></div>
<div style="left:1298px;top:499px;width:1px;height:49px;background:#cdcdcd"></div>
<div style="left:1343px;top:499px;width:1px;height:49px;background:#cdcdcd"></div>
<div style="left:1360px;top:499px;width:1px;height:49px;background:#cdcdcd"></div>
<div style="left:516px;top:547px;width:850px;height:1px;background:#cdcdcd"></div>
<svg style="left:518px;top:504px" width="13" height="13"><rect x="0.5" y="0.5" width="12" height="12" fill="#e7e7e7" stroke="#c4c4c4"/><path d="M2.8 6.4L5.2 9L10.2 3.2" fill="none" stroke="#7a7a7a" stroke-width="1.8"/></svg>
<svg style="left:536px;top:504px" width="13" height="13"><rect x="0.5" y="0.5" width="12" height="12" fill="#e7e7e7" stroke="#c4c4c4"/><path d="M2.8 6.4L5.2 9L10.2 3.2" fill="none" stroke="#7a7a7a" stroke-width="1.8"/></svg>
<div class="g" style="left:549px;top:505px;width:68px;text-align:right;letter-spacing:0.15px">Прил.3,<br>Табл.3,<br>п.10.3</div>
<div class="g" style="left:622px;top:505px;letter-spacing:0.05px">Производство ремонтно-строительных работ осуществляется в стесненных<br>условиях застроенной части населенных пунктов: территорий общего пользования.</div>
<div class="g" style="left:1060px;top:505px;width:18px;text-align:center">К</div>
<svg style="left:1126px;top:504px" width="13" height="13"><rect x="0.5" y="0.5" width="12" height="12" fill="#fff" stroke="#555"/></svg>
<div class="g" style="left:1140px;top:505px;width:43px;text-align:right;letter-spacing:0.3px">1,1</div>
<svg style="left:1188px;top:504px" width="13" height="13"><rect x="0.5" y="0.5" width="12" height="12" fill="#fff" stroke="#555"/><path d="M2.8 6.4L5.2 9L10.2 3.2" fill="none" stroke="#000" stroke-width="2.2"/></svg>
<div class="g" style="left:1202px;top:505px;width:44px;text-align:right;letter-spacing:0.3px">1,1</div>
<svg style="left:1250px;top:504px" width="13" height="13"><rect x="0.5" y="0.5" width="12" height="12" fill="#fff" stroke="#555"/><path d="M2.8 6.4L5.2 9L10.2 3.2" fill="none" stroke="#000" stroke-width="2.2"/></svg>
<svg style="left:1267px;top:504px" width="13" height="13"><rect x="0.5" y="0.5" width="12" height="12" fill="#fff" stroke="#555"/><path d="M2.8 6.4L5.2 9L10.2 3.2" fill="none" stroke="#000" stroke-width="2.2"/></svg>
<svg style="left:1284px;top:504px" width="13" height="13"><rect x="0.5" y="0.5" width="12" height="12" fill="#fff" stroke="#555"/></svg>
<svg style="left:1346px;top:504px" width="13" height="13"><rect x="0.5" y="0.5" width="12" height="12" fill="#fff" stroke="#555"/><path d="M2.8 6.4L5.2 9L10.2 3.2" fill="none" stroke="#000" stroke-width="2.2"/></svg>
<svg style="left:1242px;top:500px" width="100" height="6"><circle cx="3" cy="3" r="2.3" fill="#137a13"/><path d="M3 3H96" stroke="#137a13" stroke-width="2"/><path d="M93 0.2L99 3L93 5.8Z" fill="#137a13"/></svg>
<div style="left:516px;top:548px;width:850px;height:48px;background:#fff"></div>
<div style="left:532px;top:547px;width:1px;height:49px;background:#cdcdcd"></div>
<div style="left:549px;top:547px;width:1px;height:49px;background:#cdcdcd"></div>
<div style="left:620px;top:547px;width:1px;height:49px;background:#cdcdcd"></div>
<div style="left:1060px;top:547px;width:1px;height:49px;background:#cdcdcd"></div>
<div style="left:1078px;top:547px;width:1px;height:49px;background:#cdcdcd"></div>
<div style="left:1123px;top:547px;width:1px;height:49px;background:#cdcdcd"></div>
<div style="left:1140px;top:547px;width:1px;height:49px;background:#cdcdcd"></div>
<div style="left:1185px;top:547px;width:1px;height:49px;background:#cdcdcd"></div>
<div style="left:1202px;top:547px;width:1px;height:49px;background:#cdcdcd"></div>
<div style="left:1247px;top:547px;width:1px;height:49px;background:#cdcdcd"></div>
<div style="left:1264px;top:547px;width:1px;height:49px;background:#cdcdcd"></div>
<div style="left:1281px;top:547px;width:1px;height:49px;background:#cdcdcd"></div>
<div style="left:1298px;top:547px;width:1px;height:49px;background:#cdcdcd"></div>
<div style="left:1343px;top:547px;width:1px;height:49px;background:#cdcdcd"></div>
<div style="left:1360px;top:547px;width:1px;height:49px;background:#cdcdcd"></div>
<div style="left:516px;top:595px;width:850px;height:1px;background:#cdcdcd"></div>
<svg style="left:518px;top:552px" width="13" height="13"><rect x="0.5" y="0.5" width="12" height="12" fill="#e7e7e7" stroke="#c4c4c4"/><path d="M2.8 6.4L5.2 9L10.2 3.2" fill="none" stroke="#7a7a7a" stroke-width="1.8"/></svg>
<svg style="left:536px;top:552px" width="13" height="13"><rect x="0.5" y="0.5" width="12" height="12" fill="#e7e7e7" stroke="#c4c4c4"/><path d="M2.8 6.4L5.2 9L10.2 3.2" fill="none" stroke="#7a7a7a" stroke-width="1.8"/></svg>
<div class="g" style="left:549px;top:553px;width:68px;text-align:right;letter-spacing:0.15px">Прил.3,<br>Табл.3,<br>п.11.1</div>
<div class="g" style="left:622px;top:553px;letter-spacing:0.05px">Производство ремонтно-строительных работ осуществляется в горной местности:<br>на высоте от 1500 до 2500 м над уровнем моря.</div>
<div class="g" style="left:1060px;top:553px;width:18px;text-align:center">К</div>
<svg style="left:1126px;top:552px" width="13" height="13"><rect x="0.5" y="0.5" width="12" height="12" fill="#fff" stroke="#555"/></svg>
<div class="g" style="left:1140px;top:553px;width:43px;text-align:right;letter-spacing:0.3px">1,25</div>
<svg style="left:1188px;top:552px" width="13" height="13"><rect x="0.5" y="0.5" width="12" height="12" fill="#fff" stroke="#555"/><path d="M2.8 6.4L5.2 9L10.2 3.2" fill="none" stroke="#000" stroke-width="2.2"/></svg>
<div class="g" style="left:1202px;top:553px;width:44px;text-align:right;letter-spacing:0.3px">1,25</div>
<svg style="left:1250px;top:552px" width="13" height="13"><rect x="0.5" y="0.5" width="12" height="12" fill="#fff" stroke="#555"/><path d="M2.8 6.4L5.2 9L10.2 3.2" fill="none" stroke="#000" stroke-width="2.2"/></svg>
<svg style="left:1267px;top:552px" width="13" height="13"><rect x="0.5" y="0.5" width="12" height="12" fill="#fff" stroke="#555"/><path d="M2.8 6.4L5.2 9L10.2 3.2" fill="none" stroke="#000" stroke-width="2.2"/></svg>
<svg style="left:1284px;top:552px" width="13" height="13"><rect x="0.5" y="0.5" width="12" height="12" fill="#fff" stroke="#555"/></svg>
<svg style="left:1346px;top:552px" width="13" height="13"><rect x="0.5" y="0.5" width="12" height="12" fill="#fff" stroke="#555"/><path d="M2.8 6.4L5.2 9L10.2 3.2" fill="none" stroke="#000" stroke-width="2.2"/></svg>
<svg style="left:1242px;top:548px" width="100" height="6"><circle cx="3" cy="3" r="2.3" fill="#137a13"/><path d="M3 3H96" stroke="#137a13" stroke-width="2"/><path d="M93 0.2L99 3L93 5.8Z" fill="#137a13"/></svg>
<div style="left:516px;top:596px;width:850px;height:48px;background:#fff"></div>
<div style="left:532px;top:595px;width:1px;height:49px;background:#cdcdcd"></div>
<div style="left:549px;top:595px;width:1px;height:49px;background:#cdcdcd"></div>
<div style="left:620px;top:595px;width:1px;height:49px;background:#cdcdcd"></div>
<div style="left:1060px;top:595px;width:1px;height:49px;background:#cdcdcd"></div>
<div style="left:1078px;top:595px;width:1px;height:49px;background:#cdcdcd"></div>
<div style="left:1123px;top:595px;width:1px;height:49px;background:#cdcdcd"></div>
<div style="left:1140px;top:595px;width:1px;height:49px;background:#cdcdcd"></div>
<div style="left:1185px;top:595px;width:1px;height:49px;background:#cdcdcd"></div>
<div style="left:1202px;top:595px;width:1px;height:49px;background:#cdcdcd"></div>
<div style="left:1247px;top:595px;width:1px;height:49px;background:#cdcdcd"></div>
<div style="left:1264px;top:595px;width:1px;height:49px;background:#cdcdcd"></div>
<div style="left:1281px;top:595px;width:1px;height:49px;background:#cdcdcd"></div>
<div style="left:1298px;top:595px;width:1px;height:49px;background:#cdcdcd"></div>
<div style="left:1343px;top:595px;width:1px;height:49px;background:#cdcdcd"></div>
<div style="left:1360px;top:595px;width:1px;height:49px;background:#cdcdcd"></div>
<div style="left:516px;top:643px;width:850px;height:1px;background:#cdcdcd"></div>
<svg style="left:518px;top:600px" width="13" height="13"><rect x="0.5" y="0.5" width="12" height="12" fill="#e7e7e7" stroke="#c4c4c4"/><path d="M2.8 6.4L5.2 9L10.2 3.2" fill="none" stroke="#7a7a7a" stroke-width="1.8"/></svg>
<svg style="left:536px;top:600px" width="13" height="13"><rect x="0.5" y="0.5" width="12" height="12" fill="#e7e7e7" stroke="#c4c4c4"/><path d="M2.8 6.4L5.2 9L10.2 3.2" fill="none" stroke="#7a7a7a" stroke-width="1.8"/></svg>
<div class="g" style="left:549px;top:601px;width:68px;text-align:right;letter-spacing:0.15px">Прил.3,<br>Табл.3,<br>п.11.2</div>
<div class="g" style="left:622px;top:601px;letter-spacing:0.05px">Производство ремонтно-строительных работ осуществляется в горной местности:<br>на высоте от 2500 до 3000 м над уровнем моря.</div>
<div class="g" style="left:1060px;top:601px;width:18px;text-align:center">К</div>
<svg style="left:1126px;top:600px" width="13" height="13"><rect x="0.5" y="0.5" width="12" height="12" fill="#fff" stroke="#555"/></svg>
<div class="g" style="left:1140px;top:601px;width:43px;text-align:right;letter-spacing:0.3px">1,35</div>
<svg style="left:1188px;top:600px" width="13" height="13"><rect x="0.5" y="0.5" width="12" height="12" fill="#fff" stroke="#555"/><path d="M2.8 6.4L5.2 9L10.2 3.2" fill="none" stroke="#000" stroke-width="2.2"/></svg>
<div class="g" style="left:1202px;top:601px;width:44px;text-align:right;letter-spacing:0.3px">1,35</div>
<svg style="left:1250px;top:600px" width="13" height="13"><rect x="0.5" y="0.5" width="12" height="12" fill="#fff" stroke="#555"/><path d="M2.8 6.4L5.2 9L10.2 3.2" fill="none" stroke="#000" stroke-width="2.2"/></svg>
<svg style="left:1267px;top:600px" width="13" height="13"><rect x="0.5" y="0.5" width="12" height="12" fill="#fff" stroke="#555"/><path d="M2.8 6.4L5.2 9L10.2 3.2" fill="none" stroke="#000" stroke-width="2.2"/></svg>
<svg style="left:1284px;top:600px" width="13" height="13"><rect x="0.5" y="0.5" width="12" height="12" fill="#fff" stroke="#555"/></svg>
<svg style="left:1346px;top:600px" width="13" height="13"><rect x="0.5" y="0.5" width="12" height="12" fill="#fff" stroke="#555"/><path d="M2.8 6.4L5.2 9L10.2 3.2" fill="none" stroke="#000" stroke-width="2.2"/></svg>
<svg style="left:1242px;top:596px" width="100" height="6"><circle cx="3" cy="3" r="2.3" fill="#137a13"/><path d="M3 3H96" stroke="#137a13" stroke-width="2"/><path d="M93 0.2L99 3L93 5.8Z" fill="#137a13"/></svg>
<div style="left:516px;top:644px;width:850px;height:47px;background:#fff"></div>
<div style="left:532px;top:643px;width:1px;height:48px;background:#cdcdcd"></div>
<div style="left:549px;top:643px;width:1px;height:48px;background:#cdcdcd"></div>
<div style="left:620px;top:643px;width:1px;height:48px;background:#cdcdcd"></div>
<div style="left:1060px;top:643px;width:1px;height:48px;background:#cdcdcd"></div>
<div style="left:1078px;top:643px;width:1px;height:48px;background:#cdcdcd"></div>
<div style="left:1123px;top:643px;width:1px;height:48px;background:#cdcdcd"></div>
<div style="left:1140px;top:643px;width:1px;height:48px;background:#cdcdcd"></div>
<div style="left:1185px;top:643px;width:1px;height:48px;background:#cdcdcd"></div>
<div style="left:1202px;top:643px;width:1px;height:48px;background:#cdcdcd"></div>
<div style="left:1247px;top:643px;width:1px;height:48px;background:#cdcdcd"></div>
<div style="left:1264px;top:643px;width:1px;height:48px;background:#cdcdcd"></div>
<div style="left:1281px;top:643px;width:1px;height:48px;background:#cdcdcd"></div>
<div style="left:1298px;top:643px;width:1px;height:48px;background:#cdcdcd"></div>
<div style="left:1343px;top:643px;width:1px;height:48px;background:#cdcdcd"></div>
<div style="left:1360px;top:643px;width:1px;height:48px;background:#cdcdcd"></div>
<svg style="left:518px;top:648px" width="13" height="13"><rect x="0.5" y="0.5" width="12" height="12" fill="#e7e7e7" stroke="#c4c4c4"/><path d="M2.8 6.4L5.2 9L10.2 3.2" fill="none" stroke="#7a7a7a" stroke-width="1.8"/></svg>
<svg style="left:536px;top:648px" width="13" height="13"><rect x="0.5" y="0.5" width="12" height="12" fill="#e7e7e7" stroke="#c4c4c4"/><path d="M2.8 6.4L5.2 9L10.2 3.2" fill="none" stroke="#7a7a7a" stroke-width="1.8"/></svg>
<div class="g" style="left:549px;top:649px;width:68px;text-align:right;letter-spacing:0.15px">Прил.3,<br>Табл.3,<br>п.11.3</div>
<div class="g" style="left:622px;top:649px;letter-spacing:0.05px">Производство ремонтно-строительных работ осуществляется в горной местности:<br>на высоте от 3000 до 3500 м над уровнем моря.</div>
<div class="g" style="left:1060px;top:649px;width:18px;text-align:center">К</div>
<svg style="left:1126px;top:648px" width="13" height="13"><rect x="0.5" y="0.5" width="12" height="12" fill="#fff" stroke="#555"/></svg>
<div class="g" style="left:1140px;top:649px;width:43px;text-align:right;letter-spacing:0.3px">1,5</div>
<svg style="left:1188px;top:648px" width="13" height="13"><rect x="0.5" y="0.5" width="12" height="12" fill="#fff" stroke="#555"/><path d="M2.8 6.4L5.2 9L10.2 3.2" fill="none" stroke="#000" stroke-width="2.2"/></svg>
<div class="g" style="left:1202px;top:649px;width:44px;text-align:right;letter-spacing:0.3px">1,5</div>
<svg style="left:1250px;top:648px" width="13" height="13"><rect x="0.5" y="0.5" width="12" height="12" fill="#fff" stroke="#555"/><path d="M2.8 6.4L5.2 9L10.2 3.2" fill="none" stroke="#000" stroke-width="2.2"/></svg>
<svg style="left:1267px;top:648px" width="13" height="13"><rect x="0.5" y="0.5" width="12" height="12" fill="#fff" stroke="#555"/><path d="M2.8 6.4L5.2 9L10.2 3.2" fill="none" stroke="#000" stroke-width="2.2"/></svg>
<svg style="left:1284px;top:648px" width="13" height="13"><rect x="0.5" y="0.5" width="12" height="12" fill="#fff" stroke="#555"/></svg>
<svg style="left:1346px;top:648px" width="13" height="13"><rect x="0.5" y="0.5" width="12" height="12" fill="#fff" stroke="#555"/><path d="M2.8 6.4L5.2 9L10.2 3.2" fill="none" stroke="#000" stroke-width="2.2"/></svg>
<svg style="left:1242px;top:644px" width="100" height="6"><circle cx="3" cy="3" r="2.3" fill="#137a13"/><path d="M3 3H96" stroke="#137a13" stroke-width="2"/><path d="M93 0.2L99 3L93 5.8Z" fill="#137a13"/></svg>
<div style="left:516px;top:690px;width:850px;height:4px;background:#7b9bc9;border-bottom:1px solid #6581ad"></div>
<svg style="left:1337px;top:693px" width="9" height="6"><path d="M1 5L7 0.5" stroke="#333" stroke-width="2"/></svg>
<div style="left:0px;top:728px;width:1366px;height:40px;background:#6b81a6;background-image:repeating-linear-gradient(25deg,rgba(255,255,255,0.035) 0 1px,transparent 1px 3px),repeating-linear-gradient(-15deg,rgba(0,0,30,0.04) 0 1px,transparent 1px 3px)"></div>
<svg style="left:12px;top:735px" width="27" height="26"><path d="M0 4L11 2.5V12H0Z" fill="#fff"/><path d="M12.5 2.3L26 0.5V12H12.5Z" fill="#fff"/><path d="M0 13.5H11V23L0 21.7Z" fill="#fff"/><path d="M12.5 13.5H26V25.5L12.5 23.5Z" fill="#fff"/></svg>
<svg style="left:65px;top:731px" width="33" height="33"><defs><linearGradient id="ieg" x1="0" y1="0" x2="0" y2="1"><stop offset="0" stop-color="#6ad0ff"/><stop offset="1" stop-color="#1a8ad8"/></linearGradient></defs><path d="M5 17.5A11.5 11.5 0 1 1 28 17.5V19H12.5A4.5 4.5 0 0 0 21.5 21.5H27.5A11.5 11.5 0 0 1 5 17.5ZM12.5 15H21.5A4.5 4.5 0 0 0 12.5 15Z" fill="url(#ieg)" fill-rule="evenodd"/><ellipse cx="16.5" cy="16.5" rx="16" ry="7.5" transform="rotate(-40 16.5 16.5)" fill="none" stroke="#f2c419" stroke-width="2.2" stroke-dasharray="58 8 40 100" stroke-dashoffset="0"/></svg>
<svg style="left:128px;top:733px" width="31" height="31"><defs><linearGradient id="spg" x1="0" y1="0" x2="0" y2="1"><stop offset="0" stop-color="#d8a060"/><stop offset="1" stop-color="#a06830"/></linearGradient><radialGradient id="spc" cx="0.45" cy="0.4"><stop offset="0" stop-color="#777"/><stop offset="0.6" stop-color="#333"/><stop offset="1" stop-color="#1a1a1a"/></radialGradient></defs><rect x="0.5" y="0.5" width="30" height="30" rx="7" fill="url(#spg)" stroke="#6a4018"/><circle cx="15.5" cy="15.5" r="12" fill="url(#spc)" stroke="#222"/><circle cx="15.5" cy="15.5" r="4.5" fill="#2a2a2a" stroke="#555" stroke-width="0.8"/></svg>
<svg style="left:190px;top:733px" width="31" height="31"><defs><linearGradient id="phg" x1="0" y1="0" x2="0" y2="1"><stop offset="0" stop-color="#f4e0a0"/><stop offset="0.7" stop-color="#e8a040"/><stop offset="1" stop-color="#c84a18"/></linearGradient></defs><rect x="0.5" y="0.5" width="30" height="30" rx="7" fill="#b07840" stroke="#6a4018"/><rect x="4" y="4" width="23" height="23" rx="4" fill="#fff4e0"/><rect x="6.5" y="6.5" width="18" height="18" rx="1" fill="url(#phg)"/><circle cx="15" cy="12" r="4.5" fill="none" stroke="#444" stroke-width="1" stroke-dasharray="1 1"/><path d="M15 12V23" stroke="#333" stroke-width="0.8"/></svg>
<svg style="left:253px;top:733px" width="31" height="31"><defs><radialGradient id="dcg" cx="0.5" cy="0.4" r="0.6"><stop offset="0" stop-color="#f8b030"/><stop offset="0.8" stop-color="#d07808"/><stop offset="1" stop-color="#a05000"/></radialGradient></defs><rect x="0.5" y="0.5" width="30" height="30" rx="8" fill="#3a2818"/><rect x="2" y="2" width="27" height="27" rx="7" fill="url(#dcg)"/><path d="M9 9H18V24H9Z" fill="#e8e0d0" stroke="#8a7a60" stroke-width="0.7" transform="rotate(-8 13 16)"/><path d="M12 7H21V22H12Z" fill="#faf6ee" stroke="#8a7a60" stroke-width="0.7"/><path d="M14 10H19M14 12.5H19M14 15H19M14 17.5H19" stroke="#9a8a70" stroke-width="0.8"/></svg>
<svg style="left:315px;top:732px" width="32" height="32"><path d="M3 3L13 8V30L3 26Z" fill="#f6d67a" stroke="#c8a040"/><path d="M13 8H22V30H13Z" fill="#e8c060"/><ellipse cx="20" cy="17" rx="10" ry="4" fill="#c8d0d8" stroke="#8a98a8"/><ellipse cx="19" cy="14" rx="5" ry="3" fill="#e8eef4"/></svg>
<svg style="left:377px;top:732px" width="30" height="31"><rect x="1" y="1" width="27" height="28" rx="4" fill="none" stroke="#2a4ae0" stroke-width="2"/><rect x="9" y="3" width="11" height="9" fill="none" stroke="#b0bcd8" stroke-width="1.2"/><rect x="6" y="15" width="17" height="12" fill="#d83030"/><path d="M8 19H21M8 23H21" stroke="#f08080" stroke-width="0.8"/></svg>
<svg style="left:437px;top:734px" width="33" height="29"><defs><linearGradient id="kmg" x1="0" y1="0" x2="1" y2="1"><stop offset="0" stop-color="#9a6ae0"/><stop offset="1" stop-color="#4a1a98"/></linearGradient><linearGradient id="kmw" x1="0" y1="0" x2="1" y2="0"><stop offset="0" stop-color="#c8b0d8"/><stop offset="1" stop-color="#f4eef6"/></linearGradient></defs><path d="M1 1L19 14.5L1 28Z" fill="url(#kmg)"/><path d="M32 1V28L15 14.5Z" fill="url(#kmw)"/></svg>
<svg style="left:500px;top:735px" width="31" height="24"><path d="M5 22Q0 21 1 15Q2 10 8 10Q10 2 17 3Q24 4 24 10Q30 10 30 16Q30 22 24 22Z" fill="#7cc22a"/><path d="M4 14Q8 8 14 12Q20 5 28 13" fill="none" stroke="#a8e05a" stroke-width="2"/></svg>
<div style="left:548px;top:729px;width:53px;height:38px;background:rgba(255,255,255,0.12);border:1px solid rgba(255,255,255,0.3)"></div>
<div style="left:602px;top:729px;width:4px;height:38px;background:rgba(255,255,255,0.1);border:1px solid rgba(255,255,255,0.25)"></div>
<svg style="left:559px;top:735px" width="32" height="28"><path d="M1 2H11L13 5H31V26H1Z" fill="#f2c850" stroke="#c8a030"/><rect x="3" y="1" width="4" height="3" fill="#2aa040"/><rect x="13" y="2" width="5" height="3" fill="#e03020"/><rect x="23" y="3" width="5" height="3" fill="#3080d0"/><path d="M1 8H31V26H1Z" fill="#f8dc78"/><path d="M6 26V17H26V26H22V20H10V26Z" fill="#8ad0f0" stroke="#4a90c0"/></svg>
<div style="left:609px;top:729px;width:59px;height:38px;background:rgba(255,255,255,0.2);border:1px solid rgba(255,255,255,0.6)"></div>
<svg style="left:622px;top:732px" width="33" height="32"><g stroke="#a02a10" stroke-width="0.5"><rect x="1" y="2" width="7" height="7" fill="#e8583a"/><rect x="8" y="5" width="7" height="7" fill="#e8583a"/><rect x="15" y="5" width="7" height="7" fill="#e8583a"/><rect x="8" y="12" width="7" height="7" fill="#e8583a"/></g><g stroke="#1a3a8a" stroke-width="0.5"><rect x="1" y="12" width="7" height="7" fill="#3a6ec8"/><rect x="15" y="12" width="7" height="7" fill="#3a6ec8"/><rect x="1" y="19" width="7" height="7" fill="#3a6ec8"/><rect x="8" y="19" width="7" height="7" fill="#3a6ec8"/><rect x="15" y="19" width="7" height="7" fill="#3a6ec8"/><rect x="22" y="22" width="8" height="8" fill="#3a6ec8"/><rect x="8" y="26" width="7" height="4" fill="#2a5ab0"/><rect x="15" y="26" width="7" height="4" fill="#2a5ab0"/></g></svg>
<div style="left:672px;top:729px;width:58px;height:38px;background:rgba(255,255,255,0.12);border:1px solid rgba(255,255,255,0.3)"></div>
<svg style="left:684px;top:733px" width="34" height="30"><path d="M2 17Q0 5 14 4Q27 3 27 13Q27 18 20 18Q15 18 17 23Q18 28 10 27Q3 26 2 17Z" fill="#dfe8f0" stroke="#9ab0c8"/><circle cx="8" cy="12" r="2.3" fill="#e03030"/><circle cx="13" cy="8" r="2.3" fill="#2ab040"/><circle cx="20" cy="8" r="2.3" fill="#f0c020"/><circle cx="7" cy="19" r="2.3" fill="#3070d0"/><path d="M10 29L28 4" stroke="#e09030" stroke-width="2.6"/><path d="M27 5L31 0" stroke="#c07020" stroke-width="3"/></svg>
<svg style="left:1155px;top:745px" width="9" height="6"><path d="M0.5 5.5L4.5 1L8.5 5.5Z" fill="#fff"/></svg>
<svg style="left:1174px;top:738px" width="18" height="20"><path d="M2 18L2 9L5 12L11 5L15 9L9 15L12 18Z" fill="#48b83a" stroke="#1a6a1a" stroke-width="0.8"/><rect x="11" y="0" width="6" height="8" transform="rotate(40 14 4)" fill="#ddd" stroke="#888" stroke-width="0.6"/></svg>
<svg style="left:1199px;top:739px" width="18" height="18"><rect x="1" y="10" width="2" height="3" fill="#333"/><rect x="4" y="7" width="2" height="6" fill="#333"/><rect x="7" y="4" width="2" height="9" fill="#333"/><rect x="10" y="1" width="2" height="12" fill="#333"/><circle cx="12" cy="12" r="5" fill="#e02a2a" stroke="#fff"/><path d="M10 10L14 14M14 10L10 14" stroke="#fff" stroke-width="1.4"/></svg>
<svg style="left:1227px;top:741px" width="10" height="14"><path d="M0.5 4.5H3L8 0.5V13.5L3 9.5H0.5Z" fill="#fff" stroke="#fff" stroke-width="0.5"/></svg>
<div class="t" style="left:1254px;top:741px;font-size:12px;line-height:14px;color:#fff">РУС</div>
<div class="t" style="left:1290px;top:734px;width:60px;text-align:center;font-size:12px;line-height:14px;color:#fff;letter-spacing:-0.3px">15:23</div>
<div class="t" style="left:1290px;top:751px;width:60px;text-align:center;font-size:12px;line-height:14px;color:#fff;letter-spacing:-0.5px">27.01.2019</div>
</body></html>
